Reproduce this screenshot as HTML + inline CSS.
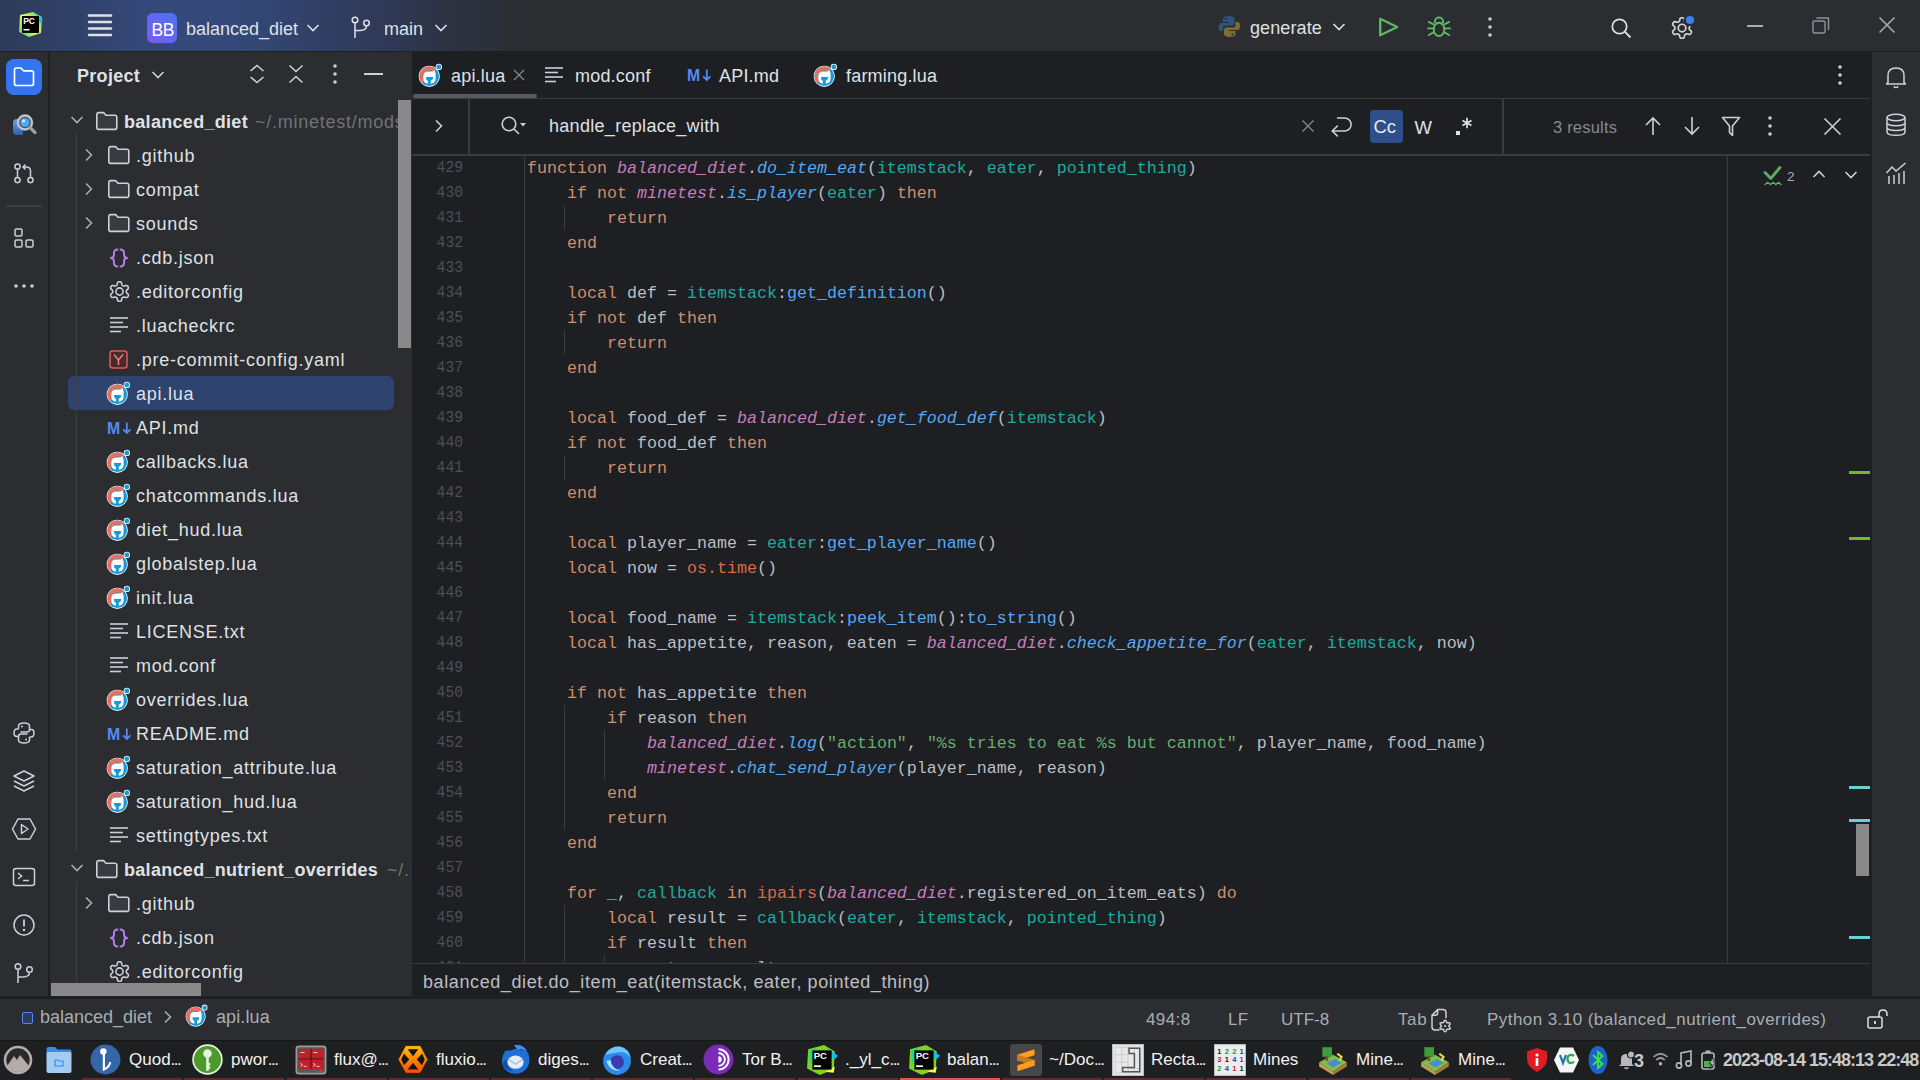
<!DOCTYPE html><html><head><meta charset="utf-8"><style>html,body{margin:0;padding:0;width:1920px;height:1080px;overflow:hidden;background:#2B2D30;position:relative}</style></head><body>
<svg width="0" height="0" style="position:absolute"><defs><symbol id="lua" viewBox="0 0 26 26"><circle cx="13.3" cy="14.3" r="10.6" fill="#F4F8FA"/><circle cx="13.3" cy="14.3" r="9.8" fill="#149BDA"/><path d="M7.64 19.96 A8 8 0 0 1 18.96 8.64" fill="none" stroke="#E5705F" stroke-width="4"/><path d="M7.3 14.6 Q7.3 9.4 12.2 9.4 H16.6 L18.3 7.9 L19.6 11.4 V16.5 Q19.6 21.8 13.4 21.8 Q7.3 21.8 7.3 16.5 Z" fill="#FFFFFF"/><path d="M9.9 15 H17.1 Q17.1 18.2 14.7 18.8 V22.8 H11.9 V18.8 Q9.9 18.2 9.9 15 Z" fill="#149BDA"/><circle cx="22.8" cy="4.9" r="3.2" fill="#F4F8FA"/><circle cx="22.8" cy="4.9" r="2.4" fill="#149BDA"/></symbol><symbol id="gear" viewBox="0 0 21 21"><path d="M17.30 10.50 L17.30 10.20 L17.32 9.90 L17.39 9.59 L17.56 9.26 L17.93 8.85 L18.52 8.35 L19.07 7.80 L19.37 7.27 L19.42 6.81 L19.34 6.38 L19.18 5.98 L18.99 5.60 L18.76 5.24 L18.49 4.91 L18.16 4.62 L17.73 4.44 L17.13 4.43 L16.37 4.63 L15.64 4.89 L15.11 5.01 L14.73 4.99 L14.43 4.89 L14.16 4.76 L13.90 4.61 L13.64 4.46 L13.39 4.29 L13.16 4.08 L12.95 3.77 L12.79 3.24 L12.65 2.48 L12.45 1.72 L12.14 1.21 L11.76 0.93 L11.35 0.79 L10.93 0.72 L10.50 0.70 L10.07 0.72 L9.65 0.79 L9.24 0.93 L8.86 1.21 L8.55 1.72 L8.35 2.48 L8.21 3.24 L8.05 3.77 L7.84 4.08 L7.61 4.29 L7.36 4.46 L7.10 4.61 L6.84 4.76 L6.57 4.89 L6.27 4.99 L5.89 5.01 L5.36 4.89 L4.63 4.63 L3.87 4.43 L3.27 4.44 L2.84 4.62 L2.51 4.91 L2.24 5.24 L2.01 5.60 L1.82 5.98 L1.66 6.38 L1.58 6.81 L1.63 7.27 L1.93 7.80 L2.48 8.35 L3.07 8.85 L3.44 9.26 L3.61 9.59 L3.68 9.90 L3.70 10.20 L3.70 10.50 L3.70 10.80 L3.68 11.10 L3.61 11.41 L3.44 11.74 L3.07 12.15 L2.48 12.65 L1.93 13.20 L1.63 13.73 L1.58 14.19 L1.66 14.62 L1.82 15.02 L2.01 15.40 L2.24 15.76 L2.51 16.09 L2.84 16.38 L3.27 16.56 L3.87 16.57 L4.63 16.37 L5.36 16.11 L5.89 15.99 L6.27 16.01 L6.57 16.11 L6.84 16.24 L7.10 16.39 L7.36 16.54 L7.61 16.71 L7.84 16.92 L8.05 17.23 L8.21 17.76 L8.35 18.52 L8.55 19.28 L8.86 19.79 L9.24 20.07 L9.65 20.21 L10.07 20.28 L10.50 20.30 L10.93 20.28 L11.35 20.21 L11.76 20.07 L12.14 19.79 L12.45 19.28 L12.65 18.52 L12.79 17.76 L12.95 17.23 L13.16 16.92 L13.39 16.71 L13.64 16.54 L13.90 16.39 L14.16 16.24 L14.43 16.11 L14.73 16.01 L15.11 15.99 L15.64 16.11 L16.37 16.37 L17.13 16.57 L17.73 16.56 L18.16 16.38 L18.49 16.09 L18.76 15.76 L18.99 15.40 L19.18 15.02 L19.34 14.62 L19.42 14.19 L19.37 13.73 L19.07 13.20 L18.52 12.65 L17.93 12.15 L17.56 11.74 L17.39 11.41 L17.32 11.10 L17.30 10.80 Z" fill="none" stroke="currentColor" stroke-width="1.6" stroke-linejoin="round"/><circle cx="10.5" cy="10.5" r="3.6" fill="none" stroke="currentColor" stroke-width="1.6"/></symbol></defs></svg>
<div style="position:absolute;left:0px;top:0px;width:1920px;height:51px;background:linear-gradient(to right, #2E3A58 0px, #34497A 150px, #34497A 230px, #303B5C 360px, #2B2D30 520px);"></div>
<div style="position:absolute;left:0px;top:51px;width:1920px;height:1px;background:#1E1F22;"></div>
<div style="position:absolute;left:0px;top:52px;width:48px;height:944px;background:#2B2D30;"></div>
<div style="position:absolute;left:48px;top:52px;width:2px;height:944px;background:#1E1F22;"></div>
<div style="position:absolute;left:50px;top:52px;width:362px;height:944px;background:#2B2D30;"></div>
<div style="position:absolute;left:412px;top:52px;width:1460px;height:911px;background:#1E1F22;"></div>
<div style="position:absolute;left:1870px;top:52px;width:2px;height:944px;background:#1E1F22;"></div>
<div style="position:absolute;left:1872px;top:52px;width:48px;height:944px;background:#2B2D30;"></div>
<div style="position:absolute;left:412px;top:963px;width:1458px;height:1px;background:#393B40;"></div>
<div style="position:absolute;left:412px;top:964px;width:1458px;height:32px;background:#1E1F22;"></div>
<div style="position:absolute;left:0px;top:996px;width:1920px;height:3px;background:#1E1F22;"></div>
<div style="position:absolute;left:0px;top:999px;width:1920px;height:41px;background:#2B2D30;"></div>
<div style="position:absolute;left:0px;top:1040px;width:1920px;height:40px;background:#1E1F21;"></div>
<div style="position:absolute;left:68px;top:376px;width:326px;height:34px;background:#2E436E;border-radius:6px"></div>
<div style="position:absolute;left:76px;top:133px;width:1px;height:719px;background:#3C3E42;"></div>
<div style="position:absolute;left:76px;top:881px;width:1px;height:115px;background:#3C3E42;"></div>
<div style="position:absolute;left:50px;top:99px;width:362px;height:897px;overflow:hidden"><div style="position:absolute;left:-50px;top:-99px;width:1920px;height:1080px">
<svg style="position:absolute;left:70px;top:115px;" width="14" height="10" viewBox="0 0 14 10"><path d="M1.5 2 L7 7.5 L12.5 2" fill="none" stroke="#A8ADBD" stroke-width="1.6"/></svg>
<svg style="position:absolute;left:95px;top:111px;" width="24" height="20" viewBox="0 0 24 20"><path d="M1.8 3.6 Q1.8 1.6 3.8 1.6 L8.6 1.6 L11 4.2 L19.8 4.2 Q21.8 4.2 21.8 6.2 L21.8 16.4 Q21.8 18.4 19.8 18.4 L3.8 18.4 Q1.8 18.4 1.8 16.4 Z" fill="#393B40" stroke="#CED0D6" stroke-width="1.6" stroke-linejoin="round"/></svg>
<div style="position:absolute;left:124px;top:111.71px;font-family:'Liberation Sans', sans-serif;font-size:18px;line-height:1;color:#DFE1E5;font-weight:700;letter-spacing:0.3px;white-space:pre;font-style:normal;"><span style="display:inline-block;line-height:normal;vertical-align:top">balanced_diet</span></div>
<div style="position:absolute;left:0;top:0;width:411px;height:1000px;overflow:hidden">
<div style="position:absolute;left:255px;top:111.71px;font-family:'Liberation Sans', sans-serif;font-size:18px;line-height:1;color:#6F737A;font-weight:400;letter-spacing:0.75px;white-space:pre;font-style:normal;"><span style="display:inline-block;line-height:normal;vertical-align:top">~/.minetest/mods/balanced_diet</span></div>
</div>
<svg style="position:absolute;left:84px;top:148px;" width="10" height="14" viewBox="0 0 10 14"><path d="M2 1.5 L7.5 7 L2 12.5" fill="none" stroke="#A8ADBD" stroke-width="1.6"/></svg>
<svg style="position:absolute;left:107px;top:145px;" width="24" height="20" viewBox="0 0 24 20"><path d="M1.8 3.6 Q1.8 1.6 3.8 1.6 L8.6 1.6 L11 4.2 L19.8 4.2 Q21.8 4.2 21.8 6.2 L21.8 16.4 Q21.8 18.4 19.8 18.4 L3.8 18.4 Q1.8 18.4 1.8 16.4 Z" fill="#393B40" stroke="#CED0D6" stroke-width="1.6" stroke-linejoin="round"/></svg>
<div style="position:absolute;left:136px;top:145.71px;font-family:'Liberation Sans', sans-serif;font-size:18px;line-height:1;color:#DFE1E5;font-weight:400;letter-spacing:0.75px;white-space:pre;font-style:normal;"><span style="display:inline-block;line-height:normal;vertical-align:top">.github</span></div>
<svg style="position:absolute;left:84px;top:182px;" width="10" height="14" viewBox="0 0 10 14"><path d="M2 1.5 L7.5 7 L2 12.5" fill="none" stroke="#A8ADBD" stroke-width="1.6"/></svg>
<svg style="position:absolute;left:107px;top:179px;" width="24" height="20" viewBox="0 0 24 20"><path d="M1.8 3.6 Q1.8 1.6 3.8 1.6 L8.6 1.6 L11 4.2 L19.8 4.2 Q21.8 4.2 21.8 6.2 L21.8 16.4 Q21.8 18.4 19.8 18.4 L3.8 18.4 Q1.8 18.4 1.8 16.4 Z" fill="#393B40" stroke="#CED0D6" stroke-width="1.6" stroke-linejoin="round"/></svg>
<div style="position:absolute;left:136px;top:179.71px;font-family:'Liberation Sans', sans-serif;font-size:18px;line-height:1;color:#DFE1E5;font-weight:400;letter-spacing:0.75px;white-space:pre;font-style:normal;"><span style="display:inline-block;line-height:normal;vertical-align:top">compat</span></div>
<svg style="position:absolute;left:84px;top:216px;" width="10" height="14" viewBox="0 0 10 14"><path d="M2 1.5 L7.5 7 L2 12.5" fill="none" stroke="#A8ADBD" stroke-width="1.6"/></svg>
<svg style="position:absolute;left:107px;top:213px;" width="24" height="20" viewBox="0 0 24 20"><path d="M1.8 3.6 Q1.8 1.6 3.8 1.6 L8.6 1.6 L11 4.2 L19.8 4.2 Q21.8 4.2 21.8 6.2 L21.8 16.4 Q21.8 18.4 19.8 18.4 L3.8 18.4 Q1.8 18.4 1.8 16.4 Z" fill="#393B40" stroke="#CED0D6" stroke-width="1.6" stroke-linejoin="round"/></svg>
<div style="position:absolute;left:136px;top:213.71px;font-family:'Liberation Sans', sans-serif;font-size:18px;line-height:1;color:#DFE1E5;font-weight:400;letter-spacing:0.75px;white-space:pre;font-style:normal;"><span style="display:inline-block;line-height:normal;vertical-align:top">sounds</span></div>
<svg style="position:absolute;left:109px;top:247.7px;" width="20" height="20" viewBox="0 0 20 20"><path d="M9.2 1.6 H8.8 Q4.9 1.6 4.9 5.6 V7.2 Q4.9 10 1.2 10 Q4.9 10 4.9 12.8 V14.4 Q4.9 18.4 8.8 18.4 H9.2 M10.8 1.6 H11.2 Q15.1 1.6 15.1 5.6 V7.2 Q15.1 10 18.8 10 Q15.1 10 15.1 12.8 V14.4 Q15.1 18.4 11.2 18.4 H10.8" fill="none" stroke="#B07FE8" stroke-width="2"/></svg>
<div style="position:absolute;left:136px;top:247.71px;font-family:'Liberation Sans', sans-serif;font-size:18px;line-height:1;color:#DFE1E5;font-weight:400;letter-spacing:0.75px;white-space:pre;font-style:normal;"><span style="display:inline-block;line-height:normal;vertical-align:top">.cdb.json</span></div>
<svg style="position:absolute;left:108.5px;top:280.5px;color:#CED0D6" width="21.0" height="21.0"><use href="#gear" width="21.0" height="21.0"/></svg>
<div style="position:absolute;left:136px;top:281.71px;font-family:'Liberation Sans', sans-serif;font-size:18px;line-height:1;color:#DFE1E5;font-weight:400;letter-spacing:0.75px;white-space:pre;font-style:normal;"><span style="display:inline-block;line-height:normal;vertical-align:top">.editorconfig</span></div>
<svg style="position:absolute;left:109px;top:316px;" width="20" height="18" viewBox="0 0 20 18"><g stroke="#CED0D6" stroke-width="1.6"><path d="M1 2 H19"/><path d="M1 6.5 H14"/><path d="M1 11 H19"/><path d="M1 15.5 H12"/></g></svg>
<div style="position:absolute;left:136px;top:315.71px;font-family:'Liberation Sans', sans-serif;font-size:18px;line-height:1;color:#DFE1E5;font-weight:400;letter-spacing:0.75px;white-space:pre;font-style:normal;"><span style="display:inline-block;line-height:normal;vertical-align:top">.luacheckrc</span></div>
<svg style="position:absolute;left:109px;top:350px;" width="20" height="20" viewBox="0 0 20 20"><rect x="1" y="1" width="17" height="17" rx="2.5" fill="#4A2B2D" stroke="#DB5C5C" stroke-width="1.5"/><path d="M5 4.5 L9.5 10 L14 4.5 M9.5 10 V15" fill="none" stroke="#F07D7D" stroke-width="1.5"/></svg>
<div style="position:absolute;left:136px;top:349.71px;font-family:'Liberation Sans', sans-serif;font-size:18px;line-height:1;color:#DFE1E5;font-weight:400;letter-spacing:0.75px;white-space:pre;font-style:normal;"><span style="display:inline-block;line-height:normal;vertical-align:top">.pre-commit-config.yaml</span></div>
<svg style="position:absolute;left:104px;top:380px" width="26.0" height="26.0"><use href="#lua" width="26.0" height="26.0"/></svg>
<div style="position:absolute;left:136px;top:383.71px;font-family:'Liberation Sans', sans-serif;font-size:18px;line-height:1;color:#DFE1E5;font-weight:400;letter-spacing:0.75px;white-space:pre;font-style:normal;"><span style="display:inline-block;line-height:normal;vertical-align:top">api.lua</span></div>
<svg style="position:absolute;left:107px;top:421px;" width="26" height="14" viewBox="0 0 26 14"><text x="0" y="12.8" font-family="Liberation Sans" font-weight="700" font-size="15.8" fill="#548AF7">M</text><path d="M19.8 1.5 V12 M16.2 8.3 L19.8 12 L23.4 8.3" fill="none" stroke="#548AF7" stroke-width="1.8"/></svg>
<div style="position:absolute;left:136px;top:417.71px;font-family:'Liberation Sans', sans-serif;font-size:18px;line-height:1;color:#DFE1E5;font-weight:400;letter-spacing:0.75px;white-space:pre;font-style:normal;"><span style="display:inline-block;line-height:normal;vertical-align:top">API.md</span></div>
<svg style="position:absolute;left:104px;top:448px" width="26.0" height="26.0"><use href="#lua" width="26.0" height="26.0"/></svg>
<div style="position:absolute;left:136px;top:451.71px;font-family:'Liberation Sans', sans-serif;font-size:18px;line-height:1;color:#DFE1E5;font-weight:400;letter-spacing:0.75px;white-space:pre;font-style:normal;"><span style="display:inline-block;line-height:normal;vertical-align:top">callbacks.lua</span></div>
<svg style="position:absolute;left:104px;top:482px" width="26.0" height="26.0"><use href="#lua" width="26.0" height="26.0"/></svg>
<div style="position:absolute;left:136px;top:485.71px;font-family:'Liberation Sans', sans-serif;font-size:18px;line-height:1;color:#DFE1E5;font-weight:400;letter-spacing:0.75px;white-space:pre;font-style:normal;"><span style="display:inline-block;line-height:normal;vertical-align:top">chatcommands.lua</span></div>
<svg style="position:absolute;left:104px;top:516px" width="26.0" height="26.0"><use href="#lua" width="26.0" height="26.0"/></svg>
<div style="position:absolute;left:136px;top:519.71px;font-family:'Liberation Sans', sans-serif;font-size:18px;line-height:1;color:#DFE1E5;font-weight:400;letter-spacing:0.75px;white-space:pre;font-style:normal;"><span style="display:inline-block;line-height:normal;vertical-align:top">diet_hud.lua</span></div>
<svg style="position:absolute;left:104px;top:550px" width="26.0" height="26.0"><use href="#lua" width="26.0" height="26.0"/></svg>
<div style="position:absolute;left:136px;top:553.71px;font-family:'Liberation Sans', sans-serif;font-size:18px;line-height:1;color:#DFE1E5;font-weight:400;letter-spacing:0.75px;white-space:pre;font-style:normal;"><span style="display:inline-block;line-height:normal;vertical-align:top">globalstep.lua</span></div>
<svg style="position:absolute;left:104px;top:584px" width="26.0" height="26.0"><use href="#lua" width="26.0" height="26.0"/></svg>
<div style="position:absolute;left:136px;top:587.71px;font-family:'Liberation Sans', sans-serif;font-size:18px;line-height:1;color:#DFE1E5;font-weight:400;letter-spacing:0.75px;white-space:pre;font-style:normal;"><span style="display:inline-block;line-height:normal;vertical-align:top">init.lua</span></div>
<svg style="position:absolute;left:109px;top:622px;" width="20" height="18" viewBox="0 0 20 18"><g stroke="#CED0D6" stroke-width="1.6"><path d="M1 2 H19"/><path d="M1 6.5 H14"/><path d="M1 11 H19"/><path d="M1 15.5 H12"/></g></svg>
<div style="position:absolute;left:136px;top:621.71px;font-family:'Liberation Sans', sans-serif;font-size:18px;line-height:1;color:#DFE1E5;font-weight:400;letter-spacing:0.75px;white-space:pre;font-style:normal;"><span style="display:inline-block;line-height:normal;vertical-align:top">LICENSE.txt</span></div>
<svg style="position:absolute;left:109px;top:656px;" width="20" height="18" viewBox="0 0 20 18"><g stroke="#CED0D6" stroke-width="1.6"><path d="M1 2 H19"/><path d="M1 6.5 H14"/><path d="M1 11 H19"/><path d="M1 15.5 H12"/></g></svg>
<div style="position:absolute;left:136px;top:655.71px;font-family:'Liberation Sans', sans-serif;font-size:18px;line-height:1;color:#DFE1E5;font-weight:400;letter-spacing:0.75px;white-space:pre;font-style:normal;"><span style="display:inline-block;line-height:normal;vertical-align:top">mod.conf</span></div>
<svg style="position:absolute;left:104px;top:686px" width="26.0" height="26.0"><use href="#lua" width="26.0" height="26.0"/></svg>
<div style="position:absolute;left:136px;top:689.71px;font-family:'Liberation Sans', sans-serif;font-size:18px;line-height:1;color:#DFE1E5;font-weight:400;letter-spacing:0.75px;white-space:pre;font-style:normal;"><span style="display:inline-block;line-height:normal;vertical-align:top">overrides.lua</span></div>
<svg style="position:absolute;left:107px;top:727px;" width="26" height="14" viewBox="0 0 26 14"><text x="0" y="12.8" font-family="Liberation Sans" font-weight="700" font-size="15.8" fill="#548AF7">M</text><path d="M19.8 1.5 V12 M16.2 8.3 L19.8 12 L23.4 8.3" fill="none" stroke="#548AF7" stroke-width="1.8"/></svg>
<div style="position:absolute;left:136px;top:723.71px;font-family:'Liberation Sans', sans-serif;font-size:18px;line-height:1;color:#DFE1E5;font-weight:400;letter-spacing:0.75px;white-space:pre;font-style:normal;"><span style="display:inline-block;line-height:normal;vertical-align:top">README.md</span></div>
<svg style="position:absolute;left:104px;top:754px" width="26.0" height="26.0"><use href="#lua" width="26.0" height="26.0"/></svg>
<div style="position:absolute;left:136px;top:757.71px;font-family:'Liberation Sans', sans-serif;font-size:18px;line-height:1;color:#DFE1E5;font-weight:400;letter-spacing:0.75px;white-space:pre;font-style:normal;"><span style="display:inline-block;line-height:normal;vertical-align:top">saturation_attribute.lua</span></div>
<svg style="position:absolute;left:104px;top:788px" width="26.0" height="26.0"><use href="#lua" width="26.0" height="26.0"/></svg>
<div style="position:absolute;left:136px;top:791.71px;font-family:'Liberation Sans', sans-serif;font-size:18px;line-height:1;color:#DFE1E5;font-weight:400;letter-spacing:0.75px;white-space:pre;font-style:normal;"><span style="display:inline-block;line-height:normal;vertical-align:top">saturation_hud.lua</span></div>
<svg style="position:absolute;left:109px;top:826px;" width="20" height="18" viewBox="0 0 20 18"><g stroke="#CED0D6" stroke-width="1.6"><path d="M1 2 H19"/><path d="M1 6.5 H14"/><path d="M1 11 H19"/><path d="M1 15.5 H12"/></g></svg>
<div style="position:absolute;left:136px;top:825.71px;font-family:'Liberation Sans', sans-serif;font-size:18px;line-height:1;color:#DFE1E5;font-weight:400;letter-spacing:0.75px;white-space:pre;font-style:normal;"><span style="display:inline-block;line-height:normal;vertical-align:top">settingtypes.txt</span></div>
<svg style="position:absolute;left:70px;top:863px;" width="14" height="10" viewBox="0 0 14 10"><path d="M1.5 2 L7 7.5 L12.5 2" fill="none" stroke="#A8ADBD" stroke-width="1.6"/></svg>
<svg style="position:absolute;left:95px;top:859px;" width="24" height="20" viewBox="0 0 24 20"><path d="M1.8 3.6 Q1.8 1.6 3.8 1.6 L8.6 1.6 L11 4.2 L19.8 4.2 Q21.8 4.2 21.8 6.2 L21.8 16.4 Q21.8 18.4 19.8 18.4 L3.8 18.4 Q1.8 18.4 1.8 16.4 Z" fill="#393B40" stroke="#CED0D6" stroke-width="1.6" stroke-linejoin="round"/></svg>
<div style="position:absolute;left:124px;top:859.71px;font-family:'Liberation Sans', sans-serif;font-size:18px;line-height:1;color:#DFE1E5;font-weight:700;letter-spacing:0.3px;white-space:pre;font-style:normal;"><span style="display:inline-block;line-height:normal;vertical-align:top">balanced_nutrient_overrides</span></div>
<div style="position:absolute;left:0;top:0;width:411px;height:1000px;overflow:hidden">
<div style="position:absolute;left:387px;top:859.71px;font-family:'Liberation Sans', sans-serif;font-size:18px;line-height:1;color:#6F737A;font-weight:400;letter-spacing:0.75px;white-space:pre;font-style:normal;"><span style="display:inline-block;line-height:normal;vertical-align:top">~/.minetest/mods</span></div>
</div>
<svg style="position:absolute;left:84px;top:896px;" width="10" height="14" viewBox="0 0 10 14"><path d="M2 1.5 L7.5 7 L2 12.5" fill="none" stroke="#A8ADBD" stroke-width="1.6"/></svg>
<svg style="position:absolute;left:107px;top:893px;" width="24" height="20" viewBox="0 0 24 20"><path d="M1.8 3.6 Q1.8 1.6 3.8 1.6 L8.6 1.6 L11 4.2 L19.8 4.2 Q21.8 4.2 21.8 6.2 L21.8 16.4 Q21.8 18.4 19.8 18.4 L3.8 18.4 Q1.8 18.4 1.8 16.4 Z" fill="#393B40" stroke="#CED0D6" stroke-width="1.6" stroke-linejoin="round"/></svg>
<div style="position:absolute;left:136px;top:893.71px;font-family:'Liberation Sans', sans-serif;font-size:18px;line-height:1;color:#DFE1E5;font-weight:400;letter-spacing:0.75px;white-space:pre;font-style:normal;"><span style="display:inline-block;line-height:normal;vertical-align:top">.github</span></div>
<svg style="position:absolute;left:109px;top:927.7px;" width="20" height="20" viewBox="0 0 20 20"><path d="M9.2 1.6 H8.8 Q4.9 1.6 4.9 5.6 V7.2 Q4.9 10 1.2 10 Q4.9 10 4.9 12.8 V14.4 Q4.9 18.4 8.8 18.4 H9.2 M10.8 1.6 H11.2 Q15.1 1.6 15.1 5.6 V7.2 Q15.1 10 18.8 10 Q15.1 10 15.1 12.8 V14.4 Q15.1 18.4 11.2 18.4 H10.8" fill="none" stroke="#B07FE8" stroke-width="2"/></svg>
<div style="position:absolute;left:136px;top:927.71px;font-family:'Liberation Sans', sans-serif;font-size:18px;line-height:1;color:#DFE1E5;font-weight:400;letter-spacing:0.75px;white-space:pre;font-style:normal;"><span style="display:inline-block;line-height:normal;vertical-align:top">.cdb.json</span></div>
<svg style="position:absolute;left:108.5px;top:960.5px;color:#CED0D6" width="21.0" height="21.0"><use href="#gear" width="21.0" height="21.0"/></svg>
<div style="position:absolute;left:136px;top:961.71px;font-family:'Liberation Sans', sans-serif;font-size:18px;line-height:1;color:#DFE1E5;font-weight:400;letter-spacing:0.75px;white-space:pre;font-style:normal;"><span style="display:inline-block;line-height:normal;vertical-align:top">.editorconfig</span></div>
<svg style="position:absolute;left:108.5px;top:994.5px;color:#CED0D6" width="21.0" height="21.0"><use href="#gear" width="21.0" height="21.0"/></svg>
<div style="position:absolute;left:136px;top:995.71px;font-family:'Liberation Sans', sans-serif;font-size:18px;line-height:1;color:#DFE1E5;font-weight:400;letter-spacing:0.75px;white-space:pre;font-style:normal;"><span style="display:inline-block;line-height:normal;vertical-align:top">.gitignore</span></div>
</div></div>
<div style="position:absolute;left:398px;top:100px;width:13px;height:248px;background:#898989;"></div>
<div style="position:absolute;left:51px;top:983px;width:150px;height:13px;background:#898989;"></div>
<div style="position:absolute;left:412px;top:155px;width:1458px;height:808px;overflow:hidden">
<div style="position:absolute;left:112px;top:0px;width:1px;height:808px;background:#393B40"></div>
<div style="position:absolute;left:152px;top:50px;width:1px;height:25px;background:#393B40"></div>
<div style="position:absolute;left:152px;top:175px;width:1px;height:25px;background:#393B40"></div>
<div style="position:absolute;left:152px;top:300px;width:1px;height:25px;background:#393B40"></div>
<div style="position:absolute;left:152px;top:550px;width:1px;height:125px;background:#393B40"></div>
<div style="position:absolute;left:192px;top:575px;width:1px;height:50px;background:#393B40"></div>
<div style="position:absolute;left:152px;top:750px;width:1px;height:75px;background:#393B40"></div>
<div style="position:absolute;left:192px;top:800px;width:1px;height:25px;background:#393B40"></div>
<div style="position:absolute;left:1315px;top:0px;width:1px;height:808px;background:#393B40"></div>
<div style="position:absolute;left:0px;top:0px;width:51px;height:25px;line-height:25px;text-align:right;font-family:'Liberation Mono', monospace;font-size:16.667px;color:#4B5059;white-space:pre;transform:scaleX(0.88);transform-origin:51px 0">429</div>
<div style="position:absolute;left:115px;top:1px;height:25px;line-height:25px;font-family:'Liberation Mono', monospace;font-size:16.667px;color:#BCBEC4;white-space:pre"><span style="color:#CF8E6D;">function</span><span style="color:#BCBEC4;"> </span><span style="color:#C77DBB;font-style:italic;">balanced_diet</span><span style="color:#BCBEC4;">.</span><span style="color:#56A8F5;font-style:italic;">do_item_eat</span><span style="color:#BCBEC4;">(</span><span style="color:#1EAA9F;">itemstack</span><span style="color:#BCBEC4;">, </span><span style="color:#1EAA9F;">eater</span><span style="color:#BCBEC4;">, </span><span style="color:#1EAA9F;">pointed_thing</span><span style="color:#BCBEC4;">)</span></div>
<div style="position:absolute;left:0px;top:25px;width:51px;height:25px;line-height:25px;text-align:right;font-family:'Liberation Mono', monospace;font-size:16.667px;color:#4B5059;white-space:pre;transform:scaleX(0.88);transform-origin:51px 0">430</div>
<div style="position:absolute;left:115px;top:26px;height:25px;line-height:25px;font-family:'Liberation Mono', monospace;font-size:16.667px;color:#BCBEC4;white-space:pre"><span style="color:#BCBEC4;">    </span><span style="color:#CF8E6D;">if not </span><span style="color:#C77DBB;font-style:italic;">minetest</span><span style="color:#BCBEC4;">.</span><span style="color:#56A8F5;font-style:italic;">is_player</span><span style="color:#BCBEC4;">(</span><span style="color:#1EAA9F;">eater</span><span style="color:#BCBEC4;">) </span><span style="color:#CF8E6D;">then</span></div>
<div style="position:absolute;left:0px;top:50px;width:51px;height:25px;line-height:25px;text-align:right;font-family:'Liberation Mono', monospace;font-size:16.667px;color:#4B5059;white-space:pre;transform:scaleX(0.88);transform-origin:51px 0">431</div>
<div style="position:absolute;left:115px;top:51px;height:25px;line-height:25px;font-family:'Liberation Mono', monospace;font-size:16.667px;color:#BCBEC4;white-space:pre"><span style="color:#BCBEC4;">        </span><span style="color:#CF8E6D;">return</span></div>
<div style="position:absolute;left:0px;top:75px;width:51px;height:25px;line-height:25px;text-align:right;font-family:'Liberation Mono', monospace;font-size:16.667px;color:#4B5059;white-space:pre;transform:scaleX(0.88);transform-origin:51px 0">432</div>
<div style="position:absolute;left:115px;top:76px;height:25px;line-height:25px;font-family:'Liberation Mono', monospace;font-size:16.667px;color:#BCBEC4;white-space:pre"><span style="color:#BCBEC4;">    </span><span style="color:#CF8E6D;">end</span></div>
<div style="position:absolute;left:0px;top:100px;width:51px;height:25px;line-height:25px;text-align:right;font-family:'Liberation Mono', monospace;font-size:16.667px;color:#4B5059;white-space:pre;transform:scaleX(0.88);transform-origin:51px 0">433</div>
<div style="position:absolute;left:115px;top:101px;height:25px;line-height:25px;font-family:'Liberation Mono', monospace;font-size:16.667px;color:#BCBEC4;white-space:pre"></div>
<div style="position:absolute;left:0px;top:125px;width:51px;height:25px;line-height:25px;text-align:right;font-family:'Liberation Mono', monospace;font-size:16.667px;color:#4B5059;white-space:pre;transform:scaleX(0.88);transform-origin:51px 0">434</div>
<div style="position:absolute;left:115px;top:126px;height:25px;line-height:25px;font-family:'Liberation Mono', monospace;font-size:16.667px;color:#BCBEC4;white-space:pre"><span style="color:#BCBEC4;">    </span><span style="color:#CF8E6D;">local </span><span style="color:#BCBEC4;">def = </span><span style="color:#1EAA9F;">itemstack</span><span style="color:#BCBEC4;">:</span><span style="color:#56A8F5;">get_definition</span><span style="color:#BCBEC4;">()</span></div>
<div style="position:absolute;left:0px;top:150px;width:51px;height:25px;line-height:25px;text-align:right;font-family:'Liberation Mono', monospace;font-size:16.667px;color:#4B5059;white-space:pre;transform:scaleX(0.88);transform-origin:51px 0">435</div>
<div style="position:absolute;left:115px;top:151px;height:25px;line-height:25px;font-family:'Liberation Mono', monospace;font-size:16.667px;color:#BCBEC4;white-space:pre"><span style="color:#BCBEC4;">    </span><span style="color:#CF8E6D;">if not </span><span style="color:#BCBEC4;">def </span><span style="color:#CF8E6D;">then</span></div>
<div style="position:absolute;left:0px;top:175px;width:51px;height:25px;line-height:25px;text-align:right;font-family:'Liberation Mono', monospace;font-size:16.667px;color:#4B5059;white-space:pre;transform:scaleX(0.88);transform-origin:51px 0">436</div>
<div style="position:absolute;left:115px;top:176px;height:25px;line-height:25px;font-family:'Liberation Mono', monospace;font-size:16.667px;color:#BCBEC4;white-space:pre"><span style="color:#BCBEC4;">        </span><span style="color:#CF8E6D;">return</span></div>
<div style="position:absolute;left:0px;top:200px;width:51px;height:25px;line-height:25px;text-align:right;font-family:'Liberation Mono', monospace;font-size:16.667px;color:#4B5059;white-space:pre;transform:scaleX(0.88);transform-origin:51px 0">437</div>
<div style="position:absolute;left:115px;top:201px;height:25px;line-height:25px;font-family:'Liberation Mono', monospace;font-size:16.667px;color:#BCBEC4;white-space:pre"><span style="color:#BCBEC4;">    </span><span style="color:#CF8E6D;">end</span></div>
<div style="position:absolute;left:0px;top:225px;width:51px;height:25px;line-height:25px;text-align:right;font-family:'Liberation Mono', monospace;font-size:16.667px;color:#4B5059;white-space:pre;transform:scaleX(0.88);transform-origin:51px 0">438</div>
<div style="position:absolute;left:115px;top:226px;height:25px;line-height:25px;font-family:'Liberation Mono', monospace;font-size:16.667px;color:#BCBEC4;white-space:pre"></div>
<div style="position:absolute;left:0px;top:250px;width:51px;height:25px;line-height:25px;text-align:right;font-family:'Liberation Mono', monospace;font-size:16.667px;color:#4B5059;white-space:pre;transform:scaleX(0.88);transform-origin:51px 0">439</div>
<div style="position:absolute;left:115px;top:251px;height:25px;line-height:25px;font-family:'Liberation Mono', monospace;font-size:16.667px;color:#BCBEC4;white-space:pre"><span style="color:#BCBEC4;">    </span><span style="color:#CF8E6D;">local </span><span style="color:#BCBEC4;">food_def = </span><span style="color:#C77DBB;font-style:italic;">balanced_diet</span><span style="color:#BCBEC4;">.</span><span style="color:#56A8F5;font-style:italic;">get_food_def</span><span style="color:#BCBEC4;">(</span><span style="color:#1EAA9F;">itemstack</span><span style="color:#BCBEC4;">)</span></div>
<div style="position:absolute;left:0px;top:275px;width:51px;height:25px;line-height:25px;text-align:right;font-family:'Liberation Mono', monospace;font-size:16.667px;color:#4B5059;white-space:pre;transform:scaleX(0.88);transform-origin:51px 0">440</div>
<div style="position:absolute;left:115px;top:276px;height:25px;line-height:25px;font-family:'Liberation Mono', monospace;font-size:16.667px;color:#BCBEC4;white-space:pre"><span style="color:#BCBEC4;">    </span><span style="color:#CF8E6D;">if not </span><span style="color:#BCBEC4;">food_def </span><span style="color:#CF8E6D;">then</span></div>
<div style="position:absolute;left:0px;top:300px;width:51px;height:25px;line-height:25px;text-align:right;font-family:'Liberation Mono', monospace;font-size:16.667px;color:#4B5059;white-space:pre;transform:scaleX(0.88);transform-origin:51px 0">441</div>
<div style="position:absolute;left:115px;top:301px;height:25px;line-height:25px;font-family:'Liberation Mono', monospace;font-size:16.667px;color:#BCBEC4;white-space:pre"><span style="color:#BCBEC4;">        </span><span style="color:#CF8E6D;">return</span></div>
<div style="position:absolute;left:0px;top:325px;width:51px;height:25px;line-height:25px;text-align:right;font-family:'Liberation Mono', monospace;font-size:16.667px;color:#4B5059;white-space:pre;transform:scaleX(0.88);transform-origin:51px 0">442</div>
<div style="position:absolute;left:115px;top:326px;height:25px;line-height:25px;font-family:'Liberation Mono', monospace;font-size:16.667px;color:#BCBEC4;white-space:pre"><span style="color:#BCBEC4;">    </span><span style="color:#CF8E6D;">end</span></div>
<div style="position:absolute;left:0px;top:350px;width:51px;height:25px;line-height:25px;text-align:right;font-family:'Liberation Mono', monospace;font-size:16.667px;color:#4B5059;white-space:pre;transform:scaleX(0.88);transform-origin:51px 0">443</div>
<div style="position:absolute;left:115px;top:351px;height:25px;line-height:25px;font-family:'Liberation Mono', monospace;font-size:16.667px;color:#BCBEC4;white-space:pre"></div>
<div style="position:absolute;left:0px;top:375px;width:51px;height:25px;line-height:25px;text-align:right;font-family:'Liberation Mono', monospace;font-size:16.667px;color:#4B5059;white-space:pre;transform:scaleX(0.88);transform-origin:51px 0">444</div>
<div style="position:absolute;left:115px;top:376px;height:25px;line-height:25px;font-family:'Liberation Mono', monospace;font-size:16.667px;color:#BCBEC4;white-space:pre"><span style="color:#BCBEC4;">    </span><span style="color:#CF8E6D;">local </span><span style="color:#BCBEC4;">player_name = </span><span style="color:#1EAA9F;">eater</span><span style="color:#BCBEC4;">:</span><span style="color:#56A8F5;">get_player_name</span><span style="color:#BCBEC4;">()</span></div>
<div style="position:absolute;left:0px;top:400px;width:51px;height:25px;line-height:25px;text-align:right;font-family:'Liberation Mono', monospace;font-size:16.667px;color:#4B5059;white-space:pre;transform:scaleX(0.88);transform-origin:51px 0">445</div>
<div style="position:absolute;left:115px;top:401px;height:25px;line-height:25px;font-family:'Liberation Mono', monospace;font-size:16.667px;color:#BCBEC4;white-space:pre"><span style="color:#BCBEC4;">    </span><span style="color:#CF8E6D;">local </span><span style="color:#BCBEC4;">now = </span><span style="color:#D96B45;">os.time</span><span style="color:#BCBEC4;">()</span></div>
<div style="position:absolute;left:0px;top:425px;width:51px;height:25px;line-height:25px;text-align:right;font-family:'Liberation Mono', monospace;font-size:16.667px;color:#4B5059;white-space:pre;transform:scaleX(0.88);transform-origin:51px 0">446</div>
<div style="position:absolute;left:115px;top:426px;height:25px;line-height:25px;font-family:'Liberation Mono', monospace;font-size:16.667px;color:#BCBEC4;white-space:pre"></div>
<div style="position:absolute;left:0px;top:450px;width:51px;height:25px;line-height:25px;text-align:right;font-family:'Liberation Mono', monospace;font-size:16.667px;color:#4B5059;white-space:pre;transform:scaleX(0.88);transform-origin:51px 0">447</div>
<div style="position:absolute;left:115px;top:451px;height:25px;line-height:25px;font-family:'Liberation Mono', monospace;font-size:16.667px;color:#BCBEC4;white-space:pre"><span style="color:#BCBEC4;">    </span><span style="color:#CF8E6D;">local </span><span style="color:#BCBEC4;">food_name = </span><span style="color:#1EAA9F;">itemstack</span><span style="color:#BCBEC4;">:</span><span style="color:#56A8F5;">peek_item</span><span style="color:#BCBEC4;">():</span><span style="color:#56A8F5;">to_string</span><span style="color:#BCBEC4;">()</span></div>
<div style="position:absolute;left:0px;top:475px;width:51px;height:25px;line-height:25px;text-align:right;font-family:'Liberation Mono', monospace;font-size:16.667px;color:#4B5059;white-space:pre;transform:scaleX(0.88);transform-origin:51px 0">448</div>
<div style="position:absolute;left:115px;top:476px;height:25px;line-height:25px;font-family:'Liberation Mono', monospace;font-size:16.667px;color:#BCBEC4;white-space:pre"><span style="color:#BCBEC4;">    </span><span style="color:#CF8E6D;">local </span><span style="color:#BCBEC4;">has_appetite, reason, eaten = </span><span style="color:#C77DBB;font-style:italic;">balanced_diet</span><span style="color:#BCBEC4;">.</span><span style="color:#56A8F5;font-style:italic;">check_appetite_for</span><span style="color:#BCBEC4;">(</span><span style="color:#1EAA9F;">eater</span><span style="color:#BCBEC4;">, </span><span style="color:#1EAA9F;">itemstack</span><span style="color:#BCBEC4;">, now)</span></div>
<div style="position:absolute;left:0px;top:500px;width:51px;height:25px;line-height:25px;text-align:right;font-family:'Liberation Mono', monospace;font-size:16.667px;color:#4B5059;white-space:pre;transform:scaleX(0.88);transform-origin:51px 0">449</div>
<div style="position:absolute;left:115px;top:501px;height:25px;line-height:25px;font-family:'Liberation Mono', monospace;font-size:16.667px;color:#BCBEC4;white-space:pre"></div>
<div style="position:absolute;left:0px;top:525px;width:51px;height:25px;line-height:25px;text-align:right;font-family:'Liberation Mono', monospace;font-size:16.667px;color:#4B5059;white-space:pre;transform:scaleX(0.88);transform-origin:51px 0">450</div>
<div style="position:absolute;left:115px;top:526px;height:25px;line-height:25px;font-family:'Liberation Mono', monospace;font-size:16.667px;color:#BCBEC4;white-space:pre"><span style="color:#BCBEC4;">    </span><span style="color:#CF8E6D;">if not </span><span style="color:#BCBEC4;">has_appetite </span><span style="color:#CF8E6D;">then</span></div>
<div style="position:absolute;left:0px;top:550px;width:51px;height:25px;line-height:25px;text-align:right;font-family:'Liberation Mono', monospace;font-size:16.667px;color:#4B5059;white-space:pre;transform:scaleX(0.88);transform-origin:51px 0">451</div>
<div style="position:absolute;left:115px;top:551px;height:25px;line-height:25px;font-family:'Liberation Mono', monospace;font-size:16.667px;color:#BCBEC4;white-space:pre"><span style="color:#BCBEC4;">        </span><span style="color:#CF8E6D;">if </span><span style="color:#BCBEC4;">reason </span><span style="color:#CF8E6D;">then</span></div>
<div style="position:absolute;left:0px;top:575px;width:51px;height:25px;line-height:25px;text-align:right;font-family:'Liberation Mono', monospace;font-size:16.667px;color:#4B5059;white-space:pre;transform:scaleX(0.88);transform-origin:51px 0">452</div>
<div style="position:absolute;left:115px;top:576px;height:25px;line-height:25px;font-family:'Liberation Mono', monospace;font-size:16.667px;color:#BCBEC4;white-space:pre"><span style="color:#BCBEC4;">            </span><span style="color:#C77DBB;font-style:italic;">balanced_diet</span><span style="color:#BCBEC4;">.</span><span style="color:#56A8F5;font-style:italic;">log</span><span style="color:#BCBEC4;">(</span><span style="color:#6AAB73;">&quot;action&quot;</span><span style="color:#BCBEC4;">, </span><span style="color:#6AAB73;">&quot;%s tries to eat %s but cannot&quot;</span><span style="color:#BCBEC4;">, player_name, food_name)</span></div>
<div style="position:absolute;left:0px;top:600px;width:51px;height:25px;line-height:25px;text-align:right;font-family:'Liberation Mono', monospace;font-size:16.667px;color:#4B5059;white-space:pre;transform:scaleX(0.88);transform-origin:51px 0">453</div>
<div style="position:absolute;left:115px;top:601px;height:25px;line-height:25px;font-family:'Liberation Mono', monospace;font-size:16.667px;color:#BCBEC4;white-space:pre"><span style="color:#BCBEC4;">            </span><span style="color:#C77DBB;font-style:italic;">minetest</span><span style="color:#BCBEC4;">.</span><span style="color:#56A8F5;font-style:italic;">chat_send_player</span><span style="color:#BCBEC4;">(player_name, reason)</span></div>
<div style="position:absolute;left:0px;top:625px;width:51px;height:25px;line-height:25px;text-align:right;font-family:'Liberation Mono', monospace;font-size:16.667px;color:#4B5059;white-space:pre;transform:scaleX(0.88);transform-origin:51px 0">454</div>
<div style="position:absolute;left:115px;top:626px;height:25px;line-height:25px;font-family:'Liberation Mono', monospace;font-size:16.667px;color:#BCBEC4;white-space:pre"><span style="color:#BCBEC4;">        </span><span style="color:#CF8E6D;">end</span></div>
<div style="position:absolute;left:0px;top:650px;width:51px;height:25px;line-height:25px;text-align:right;font-family:'Liberation Mono', monospace;font-size:16.667px;color:#4B5059;white-space:pre;transform:scaleX(0.88);transform-origin:51px 0">455</div>
<div style="position:absolute;left:115px;top:651px;height:25px;line-height:25px;font-family:'Liberation Mono', monospace;font-size:16.667px;color:#BCBEC4;white-space:pre"><span style="color:#BCBEC4;">        </span><span style="color:#CF8E6D;">return</span></div>
<div style="position:absolute;left:0px;top:675px;width:51px;height:25px;line-height:25px;text-align:right;font-family:'Liberation Mono', monospace;font-size:16.667px;color:#4B5059;white-space:pre;transform:scaleX(0.88);transform-origin:51px 0">456</div>
<div style="position:absolute;left:115px;top:676px;height:25px;line-height:25px;font-family:'Liberation Mono', monospace;font-size:16.667px;color:#BCBEC4;white-space:pre"><span style="color:#BCBEC4;">    </span><span style="color:#CF8E6D;">end</span></div>
<div style="position:absolute;left:0px;top:700px;width:51px;height:25px;line-height:25px;text-align:right;font-family:'Liberation Mono', monospace;font-size:16.667px;color:#4B5059;white-space:pre;transform:scaleX(0.88);transform-origin:51px 0">457</div>
<div style="position:absolute;left:115px;top:701px;height:25px;line-height:25px;font-family:'Liberation Mono', monospace;font-size:16.667px;color:#BCBEC4;white-space:pre"></div>
<div style="position:absolute;left:0px;top:725px;width:51px;height:25px;line-height:25px;text-align:right;font-family:'Liberation Mono', monospace;font-size:16.667px;color:#4B5059;white-space:pre;transform:scaleX(0.88);transform-origin:51px 0">458</div>
<div style="position:absolute;left:115px;top:726px;height:25px;line-height:25px;font-family:'Liberation Mono', monospace;font-size:16.667px;color:#BCBEC4;white-space:pre"><span style="color:#BCBEC4;">    </span><span style="color:#CF8E6D;">for </span><span style="color:#1EAA9F;">_</span><span style="color:#BCBEC4;">, </span><span style="color:#1EAA9F;">callback</span><span style="color:#CF8E6D;"> in </span><span style="color:#D96B45;">ipairs</span><span style="color:#BCBEC4;">(</span><span style="color:#C77DBB;font-style:italic;">balanced_diet</span><span style="color:#BCBEC4;">.registered_on_item_eats) </span><span style="color:#CF8E6D;">do</span></div>
<div style="position:absolute;left:0px;top:750px;width:51px;height:25px;line-height:25px;text-align:right;font-family:'Liberation Mono', monospace;font-size:16.667px;color:#4B5059;white-space:pre;transform:scaleX(0.88);transform-origin:51px 0">459</div>
<div style="position:absolute;left:115px;top:751px;height:25px;line-height:25px;font-family:'Liberation Mono', monospace;font-size:16.667px;color:#BCBEC4;white-space:pre"><span style="color:#BCBEC4;">        </span><span style="color:#CF8E6D;">local </span><span style="color:#BCBEC4;">result = </span><span style="color:#1EAA9F;">callback</span><span style="color:#BCBEC4;">(</span><span style="color:#1EAA9F;">eater</span><span style="color:#BCBEC4;">, </span><span style="color:#1EAA9F;">itemstack</span><span style="color:#BCBEC4;">, </span><span style="color:#1EAA9F;">pointed_thing</span><span style="color:#BCBEC4;">)</span></div>
<div style="position:absolute;left:0px;top:775px;width:51px;height:25px;line-height:25px;text-align:right;font-family:'Liberation Mono', monospace;font-size:16.667px;color:#4B5059;white-space:pre;transform:scaleX(0.88);transform-origin:51px 0">460</div>
<div style="position:absolute;left:115px;top:776px;height:25px;line-height:25px;font-family:'Liberation Mono', monospace;font-size:16.667px;color:#BCBEC4;white-space:pre"><span style="color:#BCBEC4;">        </span><span style="color:#CF8E6D;">if </span><span style="color:#BCBEC4;">result </span><span style="color:#CF8E6D;">then</span></div>
<div style="position:absolute;left:0px;top:800px;width:51px;height:25px;line-height:25px;text-align:right;font-family:'Liberation Mono', monospace;font-size:16.667px;color:#4B5059;white-space:pre;transform:scaleX(0.88);transform-origin:51px 0">461</div>
<div style="position:absolute;left:115px;top:801px;height:25px;line-height:25px;font-family:'Liberation Mono', monospace;font-size:16.667px;color:#BCBEC4;white-space:pre"><span style="color:#BCBEC4;">            </span><span style="color:#CF8E6D;">return </span><span style="color:#BCBEC4;">result</span></div>
</div>
<svg style="position:absolute;left:416.4px;top:61.7px" width="26.0" height="26.0"><use href="#lua" width="26.0" height="26.0"/></svg>
<div style="position:absolute;left:451px;top:65.71px;font-family:'Liberation Sans', sans-serif;font-size:18px;line-height:1;color:#DFE1E5;font-weight:400;letter-spacing:0.2px;white-space:pre;font-style:normal;"><span style="display:inline-block;line-height:normal;vertical-align:top">api.lua</span></div>
<svg style="position:absolute;left:512px;top:68px;" width="14" height="14" viewBox="0 0 14 14"><path d="M2 2 L12 12 M12 2 L2 12" stroke="#7F838B" stroke-width="1.4"/></svg>
<div style="position:absolute;left:413px;top:94px;width:124px;height:4px;background:#585B61;border-radius:2px"></div>
<div style="position:absolute;left:412px;top:98px;width:1458px;height:1px;background:#393B40;"></div>
<svg style="position:absolute;left:544px;top:66px;" width="20" height="18" viewBox="0 0 20 18"><g stroke="#CED0D6" stroke-width="1.6"><path d="M1 2 H19"/><path d="M1 6.5 H14"/><path d="M1 11 H19"/><path d="M1 15.5 H12"/></g></svg>
<div style="position:absolute;left:575px;top:65.71px;font-family:'Liberation Sans', sans-serif;font-size:18px;line-height:1;color:#DFE1E5;font-weight:400;letter-spacing:0.2px;white-space:pre;font-style:normal;"><span style="display:inline-block;line-height:normal;vertical-align:top">mod.conf</span></div>
<svg style="position:absolute;left:687px;top:68px;" width="26" height="14" viewBox="0 0 26 14"><text x="0" y="12.8" font-family="Liberation Sans" font-weight="700" font-size="15.8" fill="#548AF7">M</text><path d="M19.8 1.5 V12 M16.2 8.3 L19.8 12 L23.4 8.3" fill="none" stroke="#548AF7" stroke-width="1.8"/></svg>
<div style="position:absolute;left:719px;top:65.71px;font-family:'Liberation Sans', sans-serif;font-size:18px;line-height:1;color:#DFE1E5;font-weight:400;letter-spacing:0.2px;white-space:pre;font-style:normal;"><span style="display:inline-block;line-height:normal;vertical-align:top">API.md</span></div>
<svg style="position:absolute;left:811.2px;top:61.7px" width="26.0" height="26.0"><use href="#lua" width="26.0" height="26.0"/></svg>
<div style="position:absolute;left:846px;top:65.71px;font-family:'Liberation Sans', sans-serif;font-size:18px;line-height:1;color:#DFE1E5;font-weight:400;letter-spacing:0.2px;white-space:pre;font-style:normal;"><span style="display:inline-block;line-height:normal;vertical-align:top">farming.lua</span></div>
<svg style="position:absolute;left:1836px;top:63px;" width="8" height="24" viewBox="0 0 8 24"><g fill="#CED0D6"><circle cx="4" cy="4" r="1.8"/><circle cx="4" cy="12" r="1.8"/><circle cx="4" cy="20" r="1.8"/></g></svg>
<div style="position:absolute;left:412px;top:99px;width:1458px;height:56px;background:#1E1F22;"></div>
<div style="position:absolute;left:412px;top:154px;width:1458px;height:2px;background:#393B40;"></div>
<div style="position:absolute;left:468px;top:99px;width:2px;height:55px;background:#393B40;"></div>
<div style="position:absolute;left:1502px;top:99px;width:2px;height:55px;background:#393B40;"></div>
<svg style="position:absolute;left:434px;top:119px;" width="10" height="14" viewBox="0 0 10 14"><path d="M2 1.5 L7.5 7 L2 12.5" fill="none" stroke="#CED0D6" stroke-width="1.6"/></svg>
<svg style="position:absolute;left:500px;top:115px;" width="28" height="22" viewBox="0 0 28 22"><circle cx="9" cy="9" r="6.8" fill="none" stroke="#CED0D6" stroke-width="1.6"/><path d="M14 14 L19 19" stroke="#CED0D6" stroke-width="1.6"/><path d="M20 8 L26 8 L23 11.5 Z" fill="#CED0D6"/></svg>
<div style="position:absolute;left:549px;top:116.21px;font-family:'Liberation Sans', sans-serif;font-size:18px;line-height:1;color:#DFE1E5;font-weight:400;letter-spacing:0.3px;white-space:pre;font-style:normal;"><span style="display:inline-block;line-height:normal;vertical-align:top">handle_replace_with</span></div>
<svg style="position:absolute;left:1301px;top:119px;" width="14" height="14" viewBox="0 0 14 14"><path d="M1.5 1.5 L12.5 12.5 M12.5 1.5 L1.5 12.5" stroke="#868A91" stroke-width="1.3"/></svg>
<svg style="position:absolute;left:1330px;top:116px;" width="24" height="22" viewBox="0 0 24 22"><path d="M7 2 H14.6 A6.5 6.5 0 0 1 14.6 15 H2.2 M7.8 9.6 L2.2 15 L7.8 20.4" fill="none" stroke="#CED0D6" stroke-width="1.5"/></svg>
<div style="position:absolute;left:1370px;top:110px;width:33px;height:33px;background:#2F4F8B;border-radius:4px"></div>
<div style="position:absolute;left:1373.5px;top:116.26px;font-family:'Liberation Sans', sans-serif;font-size:18.5px;line-height:1;color:#E8EAEE;font-weight:400;letter-spacing:0px;white-space:pre;font-style:normal;"><span style="display:inline-block;line-height:normal;vertical-align:top">Cc</span></div>
<div style="position:absolute;left:1414.5px;top:116.76px;font-family:'Liberation Sans', sans-serif;font-size:18.5px;line-height:1;color:#DFE1E5;font-weight:400;letter-spacing:0px;white-space:pre;font-style:normal;"><span style="display:inline-block;line-height:normal;vertical-align:top">W</span></div>
<div style="position:absolute;left:1456px;top:131px;width:3.5px;height:3.5px;background:#DFE1E5;"></div>
<svg style="position:absolute;left:1461px;top:117px;" width="12" height="12" viewBox="0 0 12 12"><path d="M6 0.8 V11.2 M1.5 3.4 L10.5 8.6 M1.5 8.6 L10.5 3.4" stroke="#DFE1E5" stroke-width="1.7"/></svg>
<div style="position:absolute;left:1553px;top:118.07px;font-family:'Liberation Sans', sans-serif;font-size:16.5px;line-height:1;color:#868A91;font-weight:400;letter-spacing:0.2px;white-space:pre;font-style:normal;"><span style="display:inline-block;line-height:normal;vertical-align:top">3 results</span></div>
<svg style="position:absolute;left:1644px;top:116px;" width="18" height="20" viewBox="0 0 18 20"><path d="M9 2 V19 M2 9 L9 2 L16 9" fill="none" stroke="#CED0D6" stroke-width="1.6"/></svg>
<svg style="position:absolute;left:1683px;top:116px;" width="18" height="20" viewBox="0 0 18 20"><path d="M9 1 V18 M2 11 L9 18 L16 11" fill="none" stroke="#CED0D6" stroke-width="1.6"/></svg>
<svg style="position:absolute;left:1721px;top:116px;" width="20" height="21" viewBox="0 0 20 21"><path d="M1.5 1.5 H18.5 L11.5 10 V19.5 L8.5 16.5 V10 Z" fill="none" stroke="#CED0D6" stroke-width="1.6" stroke-linejoin="round"/></svg>
<svg style="position:absolute;left:1766px;top:114px;" width="8" height="24" viewBox="0 0 8 24"><g fill="#CED0D6"><circle cx="4" cy="4" r="1.8"/><circle cx="4" cy="12" r="1.8"/><circle cx="4" cy="20" r="1.8"/></g></svg>
<svg style="position:absolute;left:1823px;top:117px;" width="19" height="19" viewBox="0 0 19 19"><path d="M1.5 1.5 L17.5 17.5 M17.5 1.5 L1.5 17.5" stroke="#CED0D6" stroke-width="1.6"/></svg>
<svg style="position:absolute;left:1762px;top:164px;" width="22" height="24" viewBox="0 0 22 24"><path d="M3 8.5 L8.8 14.5 L18 3.5" fill="none" stroke="#5FAE5F" stroke-width="2.8" stroke-linecap="round" stroke-linejoin="round"/><path d="M3 20.5 L5.7 18.3 L8.4 20.5 L11.1 18.3 L13.8 20.5 L16.5 18.3 L19 20.5" fill="none" stroke="#5FAE5F" stroke-width="1.4" stroke-linecap="round"/></svg>
<div style="position:absolute;left:1787px;top:168.78px;font-family:'Liberation Sans', sans-serif;font-size:13.5px;line-height:1;color:#A8ADBD;font-weight:400;letter-spacing:0px;white-space:pre;font-style:normal;"><span style="display:inline-block;line-height:normal;vertical-align:top">2</span></div>
<svg style="position:absolute;left:1812px;top:168px;" width="14" height="12" viewBox="0 0 14 12"><path d="M1.5 9 L7 3.5 L12.5 9" fill="none" stroke="#CED0D6" stroke-width="1.6"/></svg>
<svg style="position:absolute;left:1844px;top:170px;" width="14" height="10" viewBox="0 0 14 10"><path d="M1.5 2 L7 7.5 L12.5 2" fill="none" stroke="#CED0D6" stroke-width="1.6"/></svg>
<div style="position:absolute;left:1849px;top:471px;width:21px;height:3px;background:#77B530;"></div>
<div style="position:absolute;left:1849px;top:537px;width:21px;height:3px;background:#77B530;"></div>
<div style="position:absolute;left:1849px;top:786px;width:21px;height:3px;background:#6BCFD5;"></div>
<div style="position:absolute;left:1849px;top:819px;width:21px;height:3px;background:#6BCFD5;"></div>
<div style="position:absolute;left:1849px;top:936px;width:21px;height:3px;background:#6BCFD5;"></div>
<div style="position:absolute;left:1856px;top:824px;width:13px;height:52px;background:#898989;"></div>
<div style="position:absolute;left:423px;top:971.71px;font-family:'Liberation Sans', sans-serif;font-size:18px;line-height:1;color:#BCBEC4;font-weight:400;letter-spacing:0.6px;white-space:pre;font-style:normal;"><span style="display:inline-block;line-height:normal;vertical-align:top">balanced_diet.do_item_eat(itemstack, eater, pointed_thing)</span></div>
<div style="position:absolute;left:77px;top:65.71px;font-family:'Liberation Sans', sans-serif;font-size:18px;line-height:1;color:#DFE1E5;font-weight:700;letter-spacing:0.3px;white-space:pre;font-style:normal;"><span style="display:inline-block;line-height:normal;vertical-align:top">Project</span></div>
<svg style="position:absolute;left:151px;top:70px;" width="14" height="10" viewBox="0 0 14 10"><path d="M1.5 2 L7 7.5 L12.5 2" fill="none" stroke="#CED0D6" stroke-width="1.6"/></svg>
<svg style="position:absolute;left:249px;top:64px;" width="16" height="20" viewBox="0 0 16 20"><path d="M1.5 7 L8 1.5 L14.5 7 M1.5 13 L8 18.5 L14.5 13" fill="none" stroke="#CED0D6" stroke-width="1.6"/></svg>
<svg style="position:absolute;left:288px;top:64px;" width="16" height="20" viewBox="0 0 16 20"><path d="M1.5 1.5 L8 7.5 L14.5 1.5 M1.5 18.5 L8 12.5 L14.5 18.5" fill="none" stroke="#CED0D6" stroke-width="1.6"/></svg>
<svg style="position:absolute;left:331px;top:62px;" width="8" height="24" viewBox="0 0 8 24"><g fill="#CED0D6"><circle cx="4" cy="4" r="1.8"/><circle cx="4" cy="12" r="1.8"/><circle cx="4" cy="20" r="1.8"/></g></svg>
<div style="position:absolute;left:364px;top:73px;width:19px;height:2px;background:#CED0D6;"></div>
<div style="position:absolute;left:6px;top:59px;width:36px;height:36px;background:#3574F0;border-radius:8px"></div>
<svg style="position:absolute;left:12px;top:66px;" width="24" height="22" viewBox="0 0 24 22"><path d="M2.5 4 Q2.5 2 4.5 2 L9 2 L11.5 4.8 L19.5 4.8 Q21.5 4.8 21.5 6.8 L21.5 17.5 Q21.5 19.5 19.5 19.5 L4.5 19.5 Q2.5 19.5 2.5 17.5 Z" fill="none" stroke="#FFFFFF" stroke-width="1.7" stroke-linejoin="round"/></svg>
<svg style="position:absolute;left:10px;top:110px;" width="28" height="28" viewBox="0 0 28 28"><defs><linearGradient id="fbl" x1="0" y1="0" x2="0" y2="1"><stop offset="0" stop-color="#6FA0E0"/><stop offset="1" stop-color="#2E5FA8"/></linearGradient></defs><path d="M3 13 Q3 9 7 9 H13 V25 H7 Q3 25 3 21 Z" fill="url(#fbl)"/><circle cx="15" cy="12.5" r="7" fill="#3A4A60" stroke="#BFC3CA" stroke-width="2.4"/><circle cx="15" cy="12.5" r="4.6" fill="#4FA8F0"/><circle cx="13.5" cy="11" r="1.8" fill="#BFE4FF"/><path d="M20 17.5 L25 22.5" stroke="#9A9EA6" stroke-width="3.2" stroke-linecap="round"/></svg>
<svg style="position:absolute;left:13px;top:163px;" width="22" height="21" viewBox="0 0 22 21"><circle cx="4.5" cy="3.5" r="2.6" fill="none" stroke="#CED0D6" stroke-width="1.5"/><circle cx="4.5" cy="17" r="2.6" fill="none" stroke="#CED0D6" stroke-width="1.5"/><circle cx="17.5" cy="17" r="2.6" fill="none" stroke="#CED0D6" stroke-width="1.5"/><path d="M4.5 6 V14.5 M17.5 14.5 V8 Q17.5 4 13.5 4 H10 M12.5 1.5 L10 4 L12.5 6.5" fill="none" stroke="#CED0D6" stroke-width="1.5"/></svg>
<div style="position:absolute;left:6px;top:205px;width:36px;height:2px;background:#3C3E42;"></div>
<svg style="position:absolute;left:13px;top:227px;" width="22" height="22" viewBox="0 0 22 22"><rect x="2" y="2" width="7" height="7" rx="1.5" fill="none" stroke="#CED0D6" stroke-width="1.5"/><rect x="2" y="13" width="7" height="7" rx="1.5" fill="none" stroke="#CED0D6" stroke-width="1.5"/><rect x="13" y="13" width="7" height="7" rx="1.5" fill="none" stroke="#CED0D6" stroke-width="1.5"/></svg>
<svg style="position:absolute;left:12px;top:282px;" width="24" height="8" viewBox="0 0 24 8"><g fill="#CED0D6"><circle cx="4" cy="4" r="1.8"/><circle cx="12" cy="4" r="1.8"/><circle cx="20" cy="4" r="1.8"/></g></svg>
<svg style="position:absolute;left:12px;top:721px;" width="24" height="24" viewBox="0 0 24 24"><path d="M8.5 11 H15 Q17.5 11 17.5 8.5 V5 Q17.5 2 12 2 Q6.5 2 6.5 5 V8 M15.5 13 H9 Q6.5 13 6.5 15.5 V19 Q6.5 22 12 22 Q17.5 22 17.5 19 V16 M6.5 8 H5 Q2 8 2 12 Q2 15.5 5 15.5 H6.5 M17.5 8.5 H19 Q22 8.5 22 12 Q22 16 19 16 H17.5" fill="none" stroke="#CED0D6" stroke-width="1.5" stroke-linejoin="round"/><circle cx="10" cy="5.5" r="1" fill="#CED0D6"/><circle cx="14" cy="18.5" r="1" fill="#CED0D6"/></svg>
<svg style="position:absolute;left:12px;top:769px;" width="24" height="24" viewBox="0 0 24 24"><path d="M12 2 L22 7 L12 12 L2 7 Z" fill="none" stroke="#CED0D6" stroke-width="1.5" stroke-linejoin="round"/><path d="M2 12 L12 17 L22 12 M2 17 L12 22 L22 17" fill="none" stroke="#CED0D6" stroke-width="1.5" stroke-linejoin="round"/></svg>
<svg style="position:absolute;left:11px;top:817px;" width="26" height="24" viewBox="0 0 26 24"><path d="M7 2 H19 L24.5 12 L19 22 H7 L1.5 12 Z" fill="none" stroke="#CED0D6" stroke-width="1.5" stroke-linejoin="round"/><path d="M10.5 7.5 L17 12 L10.5 16.5 Z" fill="none" stroke="#CED0D6" stroke-width="1.5" stroke-linejoin="round"/></svg>
<svg style="position:absolute;left:12px;top:867px;" width="24" height="20" viewBox="0 0 24 20"><rect x="1.5" y="1.5" width="21" height="17" rx="2.5" fill="none" stroke="#CED0D6" stroke-width="1.5"/><path d="M6 6 L9.5 9 L6 12 M11 13.5 H17" fill="none" stroke="#CED0D6" stroke-width="1.5"/></svg>
<svg style="position:absolute;left:12px;top:913px;" width="24" height="24" viewBox="0 0 24 24"><circle cx="12" cy="12" r="10" fill="none" stroke="#CED0D6" stroke-width="1.5"/><path d="M12 6.5 V13.5" stroke="#CED0D6" stroke-width="1.8"/><circle cx="12" cy="17" r="1.2" fill="#CED0D6"/></svg>
<svg style="position:absolute;left:13px;top:962px;" width="22" height="22" viewBox="0 0 22 22"><circle cx="5" cy="4.5" r="2.8" fill="none" stroke="#CED0D6" stroke-width="1.5"/><circle cx="16.5" cy="7.5" r="2.8" fill="none" stroke="#CED0D6" stroke-width="1.5"/><path d="M5 7.3 V21 M16.5 10.3 Q16.5 15 10 15 H5" fill="none" stroke="#CED0D6" stroke-width="1.5"/></svg>
<svg style="position:absolute;left:1885px;top:65px;" width="22" height="25" viewBox="0 0 22 25"><path d="M3 17.5 V10.5 Q3 3 11 3 Q19 3 19 10.5 V17.5 L20.5 19 H1.5 Z" fill="none" stroke="#CED0D6" stroke-width="1.5" stroke-linejoin="round"/><path d="M8.5 21.5 Q11 23.5 13.5 21.5" fill="none" stroke="#CED0D6" stroke-width="1.5"/></svg>
<svg style="position:absolute;left:1885px;top:113px;" width="22" height="24" viewBox="0 0 22 24"><ellipse cx="11" cy="4.5" rx="9" ry="3.2" fill="none" stroke="#CED0D6" stroke-width="1.5"/><path d="M2 4.5 V19 Q2 22.3 11 22.3 Q20 22.3 20 19 V4.5 M2 9.5 Q2 12.7 11 12.7 Q20 12.7 20 9.5 M2 14.3 Q2 17.5 11 17.5 Q20 17.5 20 14.3" fill="none" stroke="#CED0D6" stroke-width="1.5"/></svg>
<svg style="position:absolute;left:1885px;top:161px;" width="22" height="25" viewBox="0 0 22 25"><path d="M1.5 12 L7 6 L11 10 L20.5 2 M4 15 V23 M9 14 V23 M14 12 V23 M19 10 V23" fill="none" stroke="#CED0D6" stroke-width="1.5"/></svg>
<svg style="position:absolute;left:17px;top:11px;" width="27" height="27" viewBox="0 0 27 27"><defs><linearGradient id="pcg" x1="0" y1="1" x2="1" y2="0"><stop offset="0" stop-color="#21D789"/><stop offset="0.5" stop-color="#FCF84A"/><stop offset="1" stop-color="#21D789"/></linearGradient></defs><path d="M3 4 L16 1 L25 6 L24 22 L12 26 L2 21 Z" fill="url(#pcg)"/><path d="M19 3 L26 9 L23 12 Z" fill="#07C3F2"/><rect x="5" y="5" width="17" height="17" fill="#000"/><text x="6.2" y="13" font-family="Liberation Sans" font-weight="700" font-size="8.5" fill="#fff">PC</text><rect x="6.5" y="18" width="6" height="1.5" fill="#fff"/></svg>
<svg style="position:absolute;left:87px;top:13px;" width="26" height="24" viewBox="0 0 26 24"><g stroke="#DFE1E5" stroke-width="2.4" stroke-linecap="round"><path d="M2 2.5 H24"/><path d="M2 9 H24"/><path d="M2 15.5 H24"/><path d="M2 22 H24"/></g></svg>
<div style="position:absolute;left:147px;top:13px;width:30px;height:30px;border-radius:6px;background:linear-gradient(45deg,#7A5AF0,#4B73F0)"></div>
<div style="position:absolute;left:151.5px;top:19.66px;font-family:'Liberation Sans', sans-serif;font-size:17.5px;line-height:1;color:#FFFFFF;font-weight:400;letter-spacing:-0.3px;white-space:pre;font-style:normal;"><span style="display:inline-block;line-height:normal;vertical-align:top">BB</span></div>
<div style="position:absolute;left:186px;top:18.71px;font-family:'Liberation Sans', sans-serif;font-size:18px;line-height:1;color:#DFE1E5;font-weight:400;letter-spacing:0px;white-space:pre;font-style:normal;"><span style="display:inline-block;line-height:normal;vertical-align:top">balanced_diet</span></div>
<svg style="position:absolute;left:306px;top:23px;" width="14" height="10" viewBox="0 0 14 10"><path d="M1.5 2 L7 7.5 L12.5 2" fill="none" stroke="#DFE1E5" stroke-width="1.6"/></svg>
<svg style="position:absolute;left:351px;top:16px;" width="20" height="23" viewBox="0 0 20 23"><circle cx="4" cy="4" r="2.8" fill="none" stroke="#DFE1E5" stroke-width="1.5"/><circle cx="15.5" cy="7" r="2.8" fill="none" stroke="#DFE1E5" stroke-width="1.5"/><path d="M4 6.8 V22 M15.5 9.8 Q15.5 14.5 9 14.5 H4" fill="none" stroke="#DFE1E5" stroke-width="1.5"/></svg>
<div style="position:absolute;left:384px;top:18.71px;font-family:'Liberation Sans', sans-serif;font-size:18px;line-height:1;color:#DFE1E5;font-weight:400;letter-spacing:0px;white-space:pre;font-style:normal;"><span style="display:inline-block;line-height:normal;vertical-align:top">main</span></div>
<svg style="position:absolute;left:434px;top:23px;" width="14" height="10" viewBox="0 0 14 10"><path d="M1.5 2 L7 7.5 L12.5 2" fill="none" stroke="#DFE1E5" stroke-width="1.6"/></svg>
<svg style="position:absolute;left:1218px;top:15px;" width="23" height="23" viewBox="0 0 23 23"><path d="M11 1 Q5 1 5 4 V7 H11.5 V8 H3 Q0.5 8 0.5 12 Q0.5 16 3 16 H5 V13 Q5 10.5 7.5 10.5 H14 Q16.5 10.5 16.5 8 V4 Q16.5 1 11 1 Z" fill="#30557A"/><path d="M11.5 22 Q17.5 22 17.5 19 V16 H11 V15 H19.5 Q22 15 22 11 Q22 7 19.5 7 H17.5 V10 Q17.5 12.5 15 12.5 H8.5 Q6 12.5 6 15 V19 Q6 22 11.5 22 Z" fill="#7D6E33"/><circle cx="8" cy="3.6" r="1" fill="#1e1f22"/><circle cx="14.5" cy="19.5" r="1" fill="#1e1f22"/></svg>
<div style="position:absolute;left:1250px;top:17.71px;font-family:'Liberation Sans', sans-serif;font-size:18px;line-height:1;color:#DFE1E5;font-weight:400;letter-spacing:0.1px;white-space:pre;font-style:normal;"><span style="display:inline-block;line-height:normal;vertical-align:top">generate</span></div>
<svg style="position:absolute;left:1332px;top:22px;" width="14" height="10" viewBox="0 0 14 10"><path d="M1.5 2 L7 7.5 L12.5 2" fill="none" stroke="#DFE1E5" stroke-width="1.6"/></svg>
<svg style="position:absolute;left:1377px;top:16px;" width="24" height="22" viewBox="0 0 24 22"><path d="M3.2 2.8 L20.3 11 L3.2 19.2 Z" fill="none" stroke="#5FB865" stroke-width="2.3" stroke-linejoin="round"/></svg>
<svg style="position:absolute;left:1425px;top:15px;" width="28" height="25" viewBox="0 0 28 25"><g fill="none" stroke="#5FB865" stroke-width="1.9" stroke-linecap="round"><ellipse cx="14" cy="14.4" rx="5.3" ry="6.6"/><path d="M9.95 7.6 V6.6 A4.05 4.05 0 0 1 18.05 6.6 V7.6"/><path d="M3.8 6.9 L8.6 9.4 M3 13.4 H8.6 M3.8 20 L8.6 17.4 M24.2 6.9 L19.4 9.4 M25 13.4 H19.4 M24.2 20 L19.4 17.4"/></g></svg>
<svg style="position:absolute;left:1486px;top:15px;" width="8" height="24" viewBox="0 0 8 24"><g fill="#CED0D6"><circle cx="4" cy="4" r="1.8"/><circle cx="4" cy="12" r="1.8"/><circle cx="4" cy="20" r="1.8"/></g></svg>
<svg style="position:absolute;left:1610px;top:17px;" width="24" height="22" viewBox="0 0 24 22"><circle cx="9.5" cy="9.5" r="7.2" fill="none" stroke="#DFE1E5" stroke-width="1.7"/><path d="M14.7 14.7 L20.5 20.5" stroke="#DFE1E5" stroke-width="1.8"/></svg>
<svg style="position:absolute;left:1671px;top:17px;color:#D4D6DB" width="22.1" height="22.1"><use href="#gear" width="22.1" height="22.1"/></svg>
<svg style="position:absolute;left:1683px;top:13px;" width="14" height="14" viewBox="0 0 14 14"><circle cx="7" cy="7" r="6.3" fill="#2B2D30"/><circle cx="7" cy="7" r="4.1" fill="#3D7EF7"/></svg>
<div style="position:absolute;left:1747px;top:25px;width:16px;height:2px;background:#A8ADBD;"></div>
<svg style="position:absolute;left:1811px;top:16px;" width="20" height="19" viewBox="0 0 20 19"><rect x="2" y="5" width="12" height="12" rx="1.5" fill="none" stroke="#8F939A" stroke-width="1.4"/><path d="M5.5 2 H17.5 V14" fill="none" stroke="#8F939A" stroke-width="1.4"/></svg>
<svg style="position:absolute;left:1878px;top:16px;" width="18" height="18" viewBox="0 0 18 18"><path d="M1.5 1.5 L16.5 16.5 M16.5 1.5 L1.5 16.5" stroke="#A8ADBD" stroke-width="1.5"/></svg>
<div style="position:absolute;left:22px;top:1012px;width:11px;height:12px;background:#2B3B5E;border:1.5px solid #548AF7;border-radius:2px;box-sizing:border-box"></div>
<div style="position:absolute;left:40px;top:1006.71px;font-family:'Liberation Sans', sans-serif;font-size:18px;line-height:1;color:#A8ADB5;font-weight:400;letter-spacing:0px;white-space:pre;font-style:normal;"><span style="display:inline-block;line-height:normal;vertical-align:top">balanced_diet</span></div>
<svg style="position:absolute;left:163px;top:1010px;" width="10" height="14" viewBox="0 0 10 14"><path d="M2 1.5 L7.5 7 L2 12.5" fill="none" stroke="#A8ADBD" stroke-width="1.6"/></svg>
<svg style="position:absolute;left:183.4px;top:1003.4px" width="24.7" height="24.7"><use href="#lua" width="24.7" height="24.7"/></svg>
<div style="position:absolute;left:216px;top:1006.71px;font-family:'Liberation Sans', sans-serif;font-size:18px;line-height:1;color:#A8ADB5;font-weight:400;letter-spacing:0.1px;white-space:pre;font-style:normal;"><span style="display:inline-block;line-height:normal;vertical-align:top">api.lua</span></div>
<div style="position:absolute;left:1146px;top:1010.32px;font-family:'Liberation Sans', sans-serif;font-size:17px;line-height:1;color:#A8ADB5;font-weight:400;letter-spacing:0.4px;white-space:pre;font-style:normal;"><span style="display:inline-block;line-height:normal;vertical-align:top">494:8</span></div>
<div style="position:absolute;left:1228px;top:1010.32px;font-family:'Liberation Sans', sans-serif;font-size:17px;line-height:1;color:#A8ADB5;font-weight:400;letter-spacing:0.2px;white-space:pre;font-style:normal;"><span style="display:inline-block;line-height:normal;vertical-align:top">LF</span></div>
<div style="position:absolute;left:1281px;top:1010.32px;font-family:'Liberation Sans', sans-serif;font-size:17px;line-height:1;color:#A8ADB5;font-weight:400;letter-spacing:0px;white-space:pre;font-style:normal;"><span style="display:inline-block;line-height:normal;vertical-align:top">UTF-8</span></div>
<div style="position:absolute;left:1398px;top:1010.32px;font-family:'Liberation Sans', sans-serif;font-size:17px;line-height:1;color:#A8ADB5;font-weight:400;letter-spacing:0.6px;white-space:pre;font-style:normal;"><span style="display:inline-block;line-height:normal;vertical-align:top">Tab</span></div>
<svg style="position:absolute;left:1430px;top:1007px;" width="26" height="26" viewBox="0 0 26 26"><path d="M9.5 23 H5 Q2 23 2 20 V8.2 L7.6 2.6 H13 Q16 2.6 16 5.6 V11.2 M2 8.2 H5.6 Q7.6 8.2 7.6 6.2 V2.6" fill="none" stroke="#CED0D6" stroke-width="1.5" stroke-linejoin="round"/><path d="M18.85 19.00 L18.91 18.75 L19.09 18.47 L19.35 18.15 L19.64 17.78 L19.89 17.37 L20.06 16.94 L20.10 16.53 L19.99 16.18 L19.74 15.90 L19.36 15.73 L18.91 15.66 L18.42 15.68 L17.96 15.74 L17.55 15.80 L17.22 15.82 L16.98 15.75 L16.79 15.57 L16.64 15.28 L16.49 14.89 L16.32 14.46 L16.09 14.03 L15.80 13.67 L15.46 13.43 L15.10 13.35 L14.74 13.43 L14.40 13.67 L14.11 14.03 L13.88 14.46 L13.71 14.89 L13.56 15.28 L13.41 15.57 L13.23 15.75 L12.98 15.82 L12.65 15.80 L12.24 15.74 L11.78 15.68 L11.29 15.66 L10.84 15.73 L10.46 15.90 L10.21 16.18 L10.10 16.53 L10.14 16.94 L10.31 17.37 L10.56 17.78 L10.85 18.15 L11.11 18.47 L11.29 18.75 L11.35 19.00 L11.29 19.25 L11.11 19.53 L10.85 19.85 L10.56 20.22 L10.31 20.63 L10.14 21.06 L10.10 21.47 L10.21 21.82 L10.46 22.10 L10.84 22.27 L11.29 22.34 L11.78 22.32 L12.24 22.26 L12.65 22.20 L12.98 22.18 L13.22 22.25 L13.41 22.43 L13.56 22.72 L13.71 23.11 L13.88 23.54 L14.11 23.97 L14.40 24.33 L14.74 24.57 L15.10 24.65 L15.46 24.57 L15.80 24.33 L16.09 23.97 L16.32 23.54 L16.49 23.11 L16.64 22.72 L16.79 22.43 L16.98 22.25 L17.22 22.18 L17.55 22.20 L17.96 22.26 L18.42 22.32 L18.91 22.34 L19.36 22.27 L19.74 22.10 L19.99 21.83 L20.10 21.47 L20.06 21.06 L19.89 20.63 L19.64 20.22 L19.35 19.85 L19.09 19.53 L18.91 19.25 Z" fill="#2B2D30" stroke="#CED0D6" stroke-width="1.5" stroke-linejoin="round"/><circle cx="15.1" cy="19" r="1.1" fill="#CED0D6"/></svg>
<div style="position:absolute;left:1487px;top:1010.32px;font-family:'Liberation Sans', sans-serif;font-size:17px;line-height:1;color:#A8ADB5;font-weight:400;letter-spacing:0.44px;white-space:pre;font-style:normal;"><span style="display:inline-block;line-height:normal;vertical-align:top">Python 3.10 (balanced_nutrient_overrides)</span></div>
<svg style="position:absolute;left:1866px;top:1008px;" width="24" height="22" viewBox="0 0 24 22"><rect x="2" y="9" width="14" height="11" rx="2" fill="none" stroke="#DFE1E5" stroke-width="1.5"/><path d="M13 9 V6 Q13 2 17 2 Q21 2 21 6 V8" fill="none" stroke="#DFE1E5" stroke-width="1.5"/><path d="M9 13 V16" stroke="#DFE1E5" stroke-width="1.8"/></svg>
<div style="position:absolute;left:0px;top:1040px;width:1920px;height:1px;background:#151618;"></div>
<svg style="position:absolute;left:3px;top:1045px;" width="30" height="30" viewBox="0 0 30 30"><circle cx="15" cy="15" r="13" fill="#2A2A2C" stroke="#B5ACAA" stroke-width="2.6"/><path d="M4 21 L11 11 L14 15 L17 10 L26 21 Q22 26.5 15 27 Q8 26.5 4 21 Z" fill="#B5ACAA"/></svg>
<svg style="position:absolute;left:45px;top:1046px;" width="28" height="28" viewBox="0 0 28 28"><path d="M1.5 3 Q1.5 1 3.5 1 H10 L12.5 3.5 H24.5 Q26.5 3.5 26.5 5.5 V8 H1.5 Z" fill="#3D8AE6"/><rect x="1.5" y="6" width="25" height="21" rx="2" fill="#A4CBF2"/><path d="M10 14 H13 L14 15 H18 V20 H10 Z" fill="none" stroke="#3D8AE6" stroke-width="1.2"/></svg>
<svg style="position:absolute;left:90px;top:1044px" width="32" height="32" viewBox="0 0 30 30"><circle cx="14.5" cy="14.5" r="14" fill="#3567A8"/><path d="M13 6 V24 Q18 22 19 17" fill="none" stroke="#fff" stroke-width="2"/><circle cx="12.5" cy="7" r="3" fill="#fff"/></svg>
<div style="position:absolute;left:129px;top:1049.62px;font-family:'Liberation Sans', sans-serif;font-size:17px;line-height:1;color:#F2F2F2;font-weight:400;letter-spacing:0px;white-space:pre;font-style:normal;"><span style="display:inline-block;line-height:normal;vertical-align:top">Quod<span style="letter-spacing:-1.5px">...</span></span></div>
<div style="position:absolute;left:82px;top:1078px;width:100px;height:2px;background:#5A2E33;"></div>
<svg style="position:absolute;left:192px;top:1044px" width="32" height="32" viewBox="0 0 30 30"><circle cx="14.5" cy="14.5" r="13.5" fill="#4C9A2A" stroke="#E8F0E0" stroke-width="1.6"/><circle cx="14.5" cy="9" r="4" fill="#E8F0E0"/><path d="M14.5 12 V25 M14.5 19 H17 M14.5 22 H17" stroke="#E8F0E0" stroke-width="2.4"/></svg>
<div style="position:absolute;left:231px;top:1049.62px;font-family:'Liberation Sans', sans-serif;font-size:17px;line-height:1;color:#F2F2F2;font-weight:400;letter-spacing:0px;white-space:pre;font-style:normal;"><span style="display:inline-block;line-height:normal;vertical-align:top">pwor<span style="letter-spacing:-1.5px">...</span></span></div>
<div style="position:absolute;left:184px;top:1078px;width:100px;height:2px;background:#5A2E33;"></div>
<svg style="position:absolute;left:295px;top:1044px" width="32" height="32" viewBox="0 0 30 30"><rect x="0.5" y="1.5" width="29" height="27" rx="3" fill="#9A9A9A"/><rect x="2" y="3" width="26" height="24" rx="2" fill="#5A5A5A"/><rect x="3.5" y="4.5" width="23" height="19" fill="#C0202A"/><path d="M15 4.5 V23.5 M3.5 14 H26.5" stroke="#70101A" stroke-width="1.2"/><path d="M5 8 H9 M17 8 H21 M5 18 L7 19.5 L5 21 M8 21 H11 M17 18 L19 19.5 L17 21 M20 21 H23" stroke="#F0D0D0" stroke-width="0.9" fill="none"/><circle cx="24" cy="25.3" r="0.9" fill="#FF3030"/></svg>
<div style="position:absolute;left:334px;top:1049.62px;font-family:'Liberation Sans', sans-serif;font-size:17px;line-height:1;color:#F2F2F2;font-weight:400;letter-spacing:0px;white-space:pre;font-style:normal;"><span style="display:inline-block;line-height:normal;vertical-align:top">flux@<span style="letter-spacing:-1.5px">...</span></span></div>
<div style="position:absolute;left:287px;top:1078px;width:100px;height:2px;background:#5A2E33;"></div>
<svg style="position:absolute;left:397px;top:1044px" width="32" height="32" viewBox="0 0 30 30"><defs><linearGradient id="hxg" x1="0" y1="0" x2="0" y2="1"><stop offset="0" stop-color="#FFC000"/><stop offset="1" stop-color="#FF4A00"/></linearGradient></defs><path d="M8 1.5 H22 L29 14.5 L22 27.5 H8 L1 14.5 Z" fill="url(#hxg)" stroke="#2A1A00" stroke-width="0.8"/><path d="M10 5 H20 L15 11.5 Z M10 24 H20 L15 17.5 Z M6.5 9 L11.5 14.5 L6.5 20 L4 14.5 Z M23.5 9 L18.5 14.5 L23.5 20 L26 14.5 Z" fill="#141414"/></svg>
<div style="position:absolute;left:436px;top:1049.62px;font-family:'Liberation Sans', sans-serif;font-size:17px;line-height:1;color:#F2F2F2;font-weight:400;letter-spacing:0px;white-space:pre;font-style:normal;"><span style="display:inline-block;line-height:normal;vertical-align:top">fluxio<span style="letter-spacing:-1.5px">...</span></span></div>
<div style="position:absolute;left:389px;top:1078px;width:100px;height:2px;background:#5A2E33;"></div>
<svg style="position:absolute;left:499px;top:1044px" width="32" height="32" viewBox="0 0 30 30"><path d="M6 6 Q2 12 3 18 Q5 27 15 28 Q25 28 28 19 Q30 10 24 4 Q20 0 14 1 Q20 2 22 6 Q17 3 11 6 Z" fill="#1E6FD8"/><path d="M14 1 Q22 0 26 6 Q21 4 17 5 Z" fill="#3C8FF0"/><ellipse cx="15.5" cy="17" rx="7.5" ry="6.3" fill="#E4ECF8"/><path d="M9 14.5 L15.5 19 L22 14.5" fill="none" stroke="#A8BCDC" stroke-width="1.2"/><path d="M3 18 Q6 25 14 26 Q7 22 7 14 Z" fill="#0F4FB0"/></svg>
<div style="position:absolute;left:538px;top:1049.62px;font-family:'Liberation Sans', sans-serif;font-size:17px;line-height:1;color:#F2F2F2;font-weight:400;letter-spacing:0px;white-space:pre;font-style:normal;"><span style="display:inline-block;line-height:normal;vertical-align:top">diges<span style="letter-spacing:-1.5px">...</span></span></div>
<div style="position:absolute;left:491px;top:1078px;width:100px;height:2px;background:#5A2E33;"></div>
<svg style="position:absolute;left:601px;top:1044px" width="32" height="32" viewBox="0 0 30 30"><circle cx="15" cy="16" r="13" fill="#2A8BEA"/><path d="M4 10 Q8 2 17 2 Q27 4 28 14 Q24 6 15 8 Z" fill="#6FC3FF"/><circle cx="15" cy="17" r="6.5" fill="#3B3AB0"/><path d="M5 16 Q8 26 18 25 Q10 23 9 15 Z" fill="#9FE0FF"/></svg>
<div style="position:absolute;left:640px;top:1049.62px;font-family:'Liberation Sans', sans-serif;font-size:17px;line-height:1;color:#F2F2F2;font-weight:400;letter-spacing:0px;white-space:pre;font-style:normal;"><span style="display:inline-block;line-height:normal;vertical-align:top">Creat<span style="letter-spacing:-1.5px">...</span></span></div>
<div style="position:absolute;left:593px;top:1078px;width:100px;height:2px;background:#5A2E33;"></div>
<svg style="position:absolute;left:703px;top:1044px" width="32" height="32" viewBox="0 0 30 30"><circle cx="14.5" cy="14.5" r="14" fill="#7A2CB8"/><path d="M14.5 5 A9.5 9.5 0 0 1 14.5 24" fill="none" stroke="#fff" stroke-width="1.8"/><path d="M14.5 8.5 A6 6 0 0 1 14.5 20.5" fill="none" stroke="#fff" stroke-width="1.8"/><path d="M14.5 11.5 A3 3 0 0 1 14.5 17.5 Z" fill="#fff"/></svg>
<div style="position:absolute;left:742px;top:1049.62px;font-family:'Liberation Sans', sans-serif;font-size:17px;line-height:1;color:#F2F2F2;font-weight:400;letter-spacing:0px;white-space:pre;font-style:normal;"><span style="display:inline-block;line-height:normal;vertical-align:top">Tor B<span style="letter-spacing:-1.5px">...</span></span></div>
<div style="position:absolute;left:695px;top:1078px;width:100px;height:2px;background:#5A2E33;"></div>
<svg style="position:absolute;left:806px;top:1044px" width="32" height="32" viewBox="0 0 30 30"><path d="M2 5 L17 1 L27 7 L26 24 L13 29 L1 23 Z" fill="#7ED321"/><path d="M3 6 L10 3 L4 20 Z" fill="#21D789"/><path d="M20 4 L30 11 L26 15 Z" fill="#07C3F2"/><path d="M18 26 L27 21 L26 27 Z" fill="#FCF84A"/><rect x="6" y="6" width="18" height="18" fill="#000"/><text x="7.2" y="14.5" font-family="Liberation Sans" font-weight="700" font-size="9" fill="#fff">PC</text><rect x="7.5" y="20" width="6.5" height="1.6" fill="#fff"/></svg>
<div style="position:absolute;left:845px;top:1049.62px;font-family:'Liberation Sans', sans-serif;font-size:17px;line-height:1;color:#F2F2F2;font-weight:400;letter-spacing:0px;white-space:pre;font-style:normal;"><span style="display:inline-block;line-height:normal;vertical-align:top">._yl_c<span style="letter-spacing:-1.5px">...</span></span></div>
<div style="position:absolute;left:798px;top:1078px;width:100px;height:2px;background:#5A2E33;"></div>
<svg style="position:absolute;left:908px;top:1044px" width="32" height="32" viewBox="0 0 30 30"><path d="M2 5 L17 1 L27 7 L26 24 L13 29 L1 23 Z" fill="#7ED321"/><path d="M3 6 L10 3 L4 20 Z" fill="#21D789"/><path d="M20 4 L30 11 L26 15 Z" fill="#07C3F2"/><path d="M18 26 L27 21 L26 27 Z" fill="#FCF84A"/><rect x="6" y="6" width="18" height="18" fill="#000"/><text x="7.2" y="14.5" font-family="Liberation Sans" font-weight="700" font-size="9" fill="#fff">PC</text><rect x="7.5" y="20" width="6.5" height="1.6" fill="#fff"/></svg>
<div style="position:absolute;left:947px;top:1049.62px;font-family:'Liberation Sans', sans-serif;font-size:17px;line-height:1;color:#F2F2F2;font-weight:400;letter-spacing:0px;white-space:pre;font-style:normal;"><span style="display:inline-block;line-height:normal;vertical-align:top">balan<span style="letter-spacing:-1.5px">...</span></span></div>
<div style="position:absolute;left:900px;top:1078px;width:100px;height:2px;background:#E05252;"></div>
<svg style="position:absolute;left:1010px;top:1044px" width="32" height="32" viewBox="0 0 30 30"><rect x="0" y="0" width="30" height="30" rx="3" fill="#474747"/><path d="M7 10 L23 5 V10.5 L7 15.5 Z" fill="#FF9D1E"/><path d="M7 10 L23 15 V20.5 L7 15.5 Z" fill="#C97A18"/><path d="M7 20 L23 15 V20.5 L7 25.5 Z" fill="#FF9D1E"/></svg>
<div style="position:absolute;left:1049px;top:1049.62px;font-family:'Liberation Sans', sans-serif;font-size:17px;line-height:1;color:#F2F2F2;font-weight:400;letter-spacing:0px;white-space:pre;font-style:normal;"><span style="display:inline-block;line-height:normal;vertical-align:top">~/Doc<span style="letter-spacing:-1.5px">...</span></span></div>
<div style="position:absolute;left:1002px;top:1078px;width:100px;height:2px;background:#5A2E33;"></div>
<svg style="position:absolute;left:1112px;top:1044px" width="32" height="32" viewBox="0 0 30 30"><rect x="0.5" y="0.5" width="29" height="29" fill="#E8E8E8" stroke="#BDBDBD"/><path d="M3 3 H27 V27 H3 Z M3 10 H15 M3 17 H15 M9 3 V27 M15 3 V27 M21 3 V27 M15 23 H27" fill="none" stroke="#C8C8C8" stroke-width="0.8"/><path d="M16 4 H26 V26 H10 V22 H21 V9 H16 Z" fill="none" stroke="#555" stroke-width="1.4"/></svg>
<div style="position:absolute;left:1151px;top:1049.62px;font-family:'Liberation Sans', sans-serif;font-size:17px;line-height:1;color:#F2F2F2;font-weight:400;letter-spacing:0px;white-space:pre;font-style:normal;"><span style="display:inline-block;line-height:normal;vertical-align:top">Recta<span style="letter-spacing:-1.5px">...</span></span></div>
<div style="position:absolute;left:1104px;top:1078px;width:100px;height:2px;background:#5A2E33;"></div>
<svg style="position:absolute;left:1214px;top:1044px" width="32" height="32" viewBox="0 0 30 30"><rect x="0.5" y="0.5" width="29" height="29" fill="#EDEDED" stroke="#BDBDBD"/><text x="3" y="9" font-family="Liberation Sans" font-size="7" font-weight="700" fill="#222">1</text><text x="10" y="9" font-family="Liberation Sans" font-size="7" font-weight="700" fill="#2A9A2A">2</text><text x="17" y="9" font-family="Liberation Sans" font-size="7" font-weight="700" fill="#2A9A2A">2</text><text x="24" y="9" font-family="Liberation Sans" font-size="7" font-weight="700" fill="#2040C0">1</text><text x="3" y="17" font-family="Liberation Sans" font-size="7" font-weight="700" fill="#D02020">3</text><text x="10" y="17" font-family="Liberation Sans" font-size="7" font-weight="700" fill="#222">1</text><text x="17" y="17" font-family="Liberation Sans" font-size="7" font-weight="700" fill="#2040C0">4</text><text x="24" y="17" font-family="Liberation Sans" font-size="7" font-weight="700" fill="#D02020">1</text><text x="3" y="25" font-family="Liberation Sans" font-size="7" font-weight="700" fill="#2A9A2A">2</text><text x="10" y="25" font-family="Liberation Sans" font-size="7" font-weight="700" fill="#2040C0">4</text><text x="17" y="25" font-family="Liberation Sans" font-size="7" font-weight="700" fill="#D02020">1</text><text x="24" y="25" font-family="Liberation Sans" font-size="7" font-weight="700" fill="#222">1</text></svg>
<div style="position:absolute;left:1253px;top:1049.62px;font-family:'Liberation Sans', sans-serif;font-size:17px;line-height:1;color:#F2F2F2;font-weight:400;letter-spacing:0px;white-space:pre;font-style:normal;"><span style="display:inline-block;line-height:normal;vertical-align:top">Mines</span></div>
<div style="position:absolute;left:1206px;top:1078px;width:100px;height:2px;background:#5A2E33;"></div>
<svg style="position:absolute;left:1317px;top:1044px" width="32" height="32" viewBox="0 0 30 30"><path d="M2 17 L15 10 L28 17 L15 26 Z" fill="#7CC04A"/><path d="M2 17 V21 L15 29 V26 Z" fill="#C89A58"/><path d="M28 17 V21 L15 29 V26 Z" fill="#A87838"/><path d="M9 18 L17 14 L23 17.5 L15 22 Z" fill="#4A8AD8"/><rect x="5" y="3" width="9" height="9" fill="#3E9E3A"/><rect x="8" y="11" width="2.5" height="5" fill="#7A5230"/><path d="M19 9 L23 12 L21 16" fill="none" stroke="#E8D050" stroke-width="2"/></svg>
<div style="position:absolute;left:1356px;top:1049.62px;font-family:'Liberation Sans', sans-serif;font-size:17px;line-height:1;color:#F2F2F2;font-weight:400;letter-spacing:0px;white-space:pre;font-style:normal;"><span style="display:inline-block;line-height:normal;vertical-align:top">Mine<span style="letter-spacing:-1.5px">...</span></span></div>
<div style="position:absolute;left:1309px;top:1078px;width:100px;height:2px;background:#5A2E33;"></div>
<svg style="position:absolute;left:1419px;top:1044px" width="32" height="32" viewBox="0 0 30 30"><path d="M2 17 L15 10 L28 17 L15 26 Z" fill="#7CC04A"/><path d="M2 17 V21 L15 29 V26 Z" fill="#C89A58"/><path d="M28 17 V21 L15 29 V26 Z" fill="#A87838"/><path d="M9 18 L17 14 L23 17.5 L15 22 Z" fill="#4A8AD8"/><rect x="5" y="3" width="9" height="9" fill="#3E9E3A"/><rect x="8" y="11" width="2.5" height="5" fill="#7A5230"/><path d="M19 9 L23 12 L21 16" fill="none" stroke="#E8D050" stroke-width="2"/></svg>
<div style="position:absolute;left:1458px;top:1049.62px;font-family:'Liberation Sans', sans-serif;font-size:17px;line-height:1;color:#F2F2F2;font-weight:400;letter-spacing:0px;white-space:pre;font-style:normal;"><span style="display:inline-block;line-height:normal;vertical-align:top">Mine<span style="letter-spacing:-1.5px">...</span></span></div>
<div style="position:absolute;left:1411px;top:1078px;width:100px;height:2px;background:#5A2E33;"></div>
<svg style="position:absolute;left:1526px;top:1047px;" width="22" height="26" viewBox="0 0 22 26"><path d="M11 1 L21 4.5 V12 Q21 20 11 25 Q1 20 1 12 V4.5 Z" fill="#E01B24"/><circle cx="11" cy="8" r="1.6" fill="#fff"/><path d="M11 11 V19" stroke="#fff" stroke-width="2.6"/></svg>
<svg style="position:absolute;left:1553px;top:1046px;" width="27" height="28" viewBox="0 0 27 28"><path d="M7 1.5 H20 L26 14 L20 26.5 H7 L1 14 Z" fill="#F5F5F5"/><path d="M7 9 L10 17 L13 9" fill="none" stroke="#1E7BB0" stroke-width="2.2"/><path d="M21 10 Q19 8.5 17 9 Q14 10 14.5 13.5 Q15 17 18 17 Q20 17 21 15.5" fill="none" stroke="#2BA84A" stroke-width="2.2"/></svg>
<svg style="position:absolute;left:1588px;top:1045px;" width="20" height="30" viewBox="0 0 20 30"><ellipse cx="10" cy="15" rx="9.5" ry="14" fill="#1D65C8"/><path d="M5 10 L14.5 19 L10 23 V7 L14.5 11 L5 20" fill="none" stroke="#3BE83B" stroke-width="1.8"/></svg>
<svg style="position:absolute;left:1618px;top:1050px;" width="18" height="20" viewBox="0 0 18 20"><path d="M3 14 V9 Q3 4 8.5 4 Q14 4 14 9 V14 L16 16 H1 Z" fill="#B8B8B8"/><circle cx="13" cy="4.5" r="3.5" fill="#B8B8B8" stroke="#1F2023" stroke-width="1.2"/><path d="M6.5 17.5 Q8.5 19.5 10.5 17.5" fill="none" stroke="#B8B8B8" stroke-width="1.5"/></svg>
<div style="position:absolute;left:1634px;top:1050.71px;font-family:'Liberation Sans', sans-serif;font-size:18px;line-height:1;color:#C8C8C8;font-weight:700;letter-spacing:0px;white-space:pre;font-style:normal;"><span style="display:inline-block;line-height:normal;vertical-align:top">3</span></div>
<svg style="position:absolute;left:1652px;top:1051px;" width="17" height="16" viewBox="0 0 17 16"><path d="M1.5 6 Q8.5 -0.5 15.5 6" fill="none" stroke="#9A9A9A" stroke-width="1.7"/><path d="M4.2 9 Q8.5 5 12.8 9" fill="none" stroke="#9A9A9A" stroke-width="1.7"/><circle cx="8.5" cy="12.8" r="1.7" fill="#B8B8B8"/></svg>
<svg style="position:absolute;left:1675px;top:1050px;" width="18" height="20" viewBox="0 0 18 20"><path d="M6 15 V3 L16 1 V13" fill="none" stroke="#B8B8B8" stroke-width="1.6"/><circle cx="4" cy="15.5" r="2.6" fill="none" stroke="#B8B8B8" stroke-width="1.6"/><circle cx="13.5" cy="13.5" r="2.6" fill="none" stroke="#B8B8B8" stroke-width="1.6"/></svg>
<svg style="position:absolute;left:1700px;top:1049px;" width="18" height="22" viewBox="0 0 18 22"><rect x="2" y="4" width="12" height="16" rx="2" fill="none" stroke="#B8B8B8" stroke-width="1.6"/><rect x="5.5" y="1.5" width="5" height="2.5" fill="#B8B8B8"/><rect x="4" y="12" width="8" height="6" fill="#4CAF50"/><path d="M12 10 L9 15 H12 L10 20 L16 13 H13 L15 10 Z" fill="#B8B8B8" stroke="#1F2023" stroke-width="0.8"/></svg>
<div style="position:absolute;left:1723px;top:1049.71px;font-family:'Liberation Sans', sans-serif;font-size:18px;line-height:1;color:#C8C8C8;font-weight:700;letter-spacing:-1.0px;white-space:pre;font-style:normal;"><span style="display:inline-block;line-height:normal;vertical-align:top">2023-08-14 15:48:13 22:48</span></div>
</body></html>
